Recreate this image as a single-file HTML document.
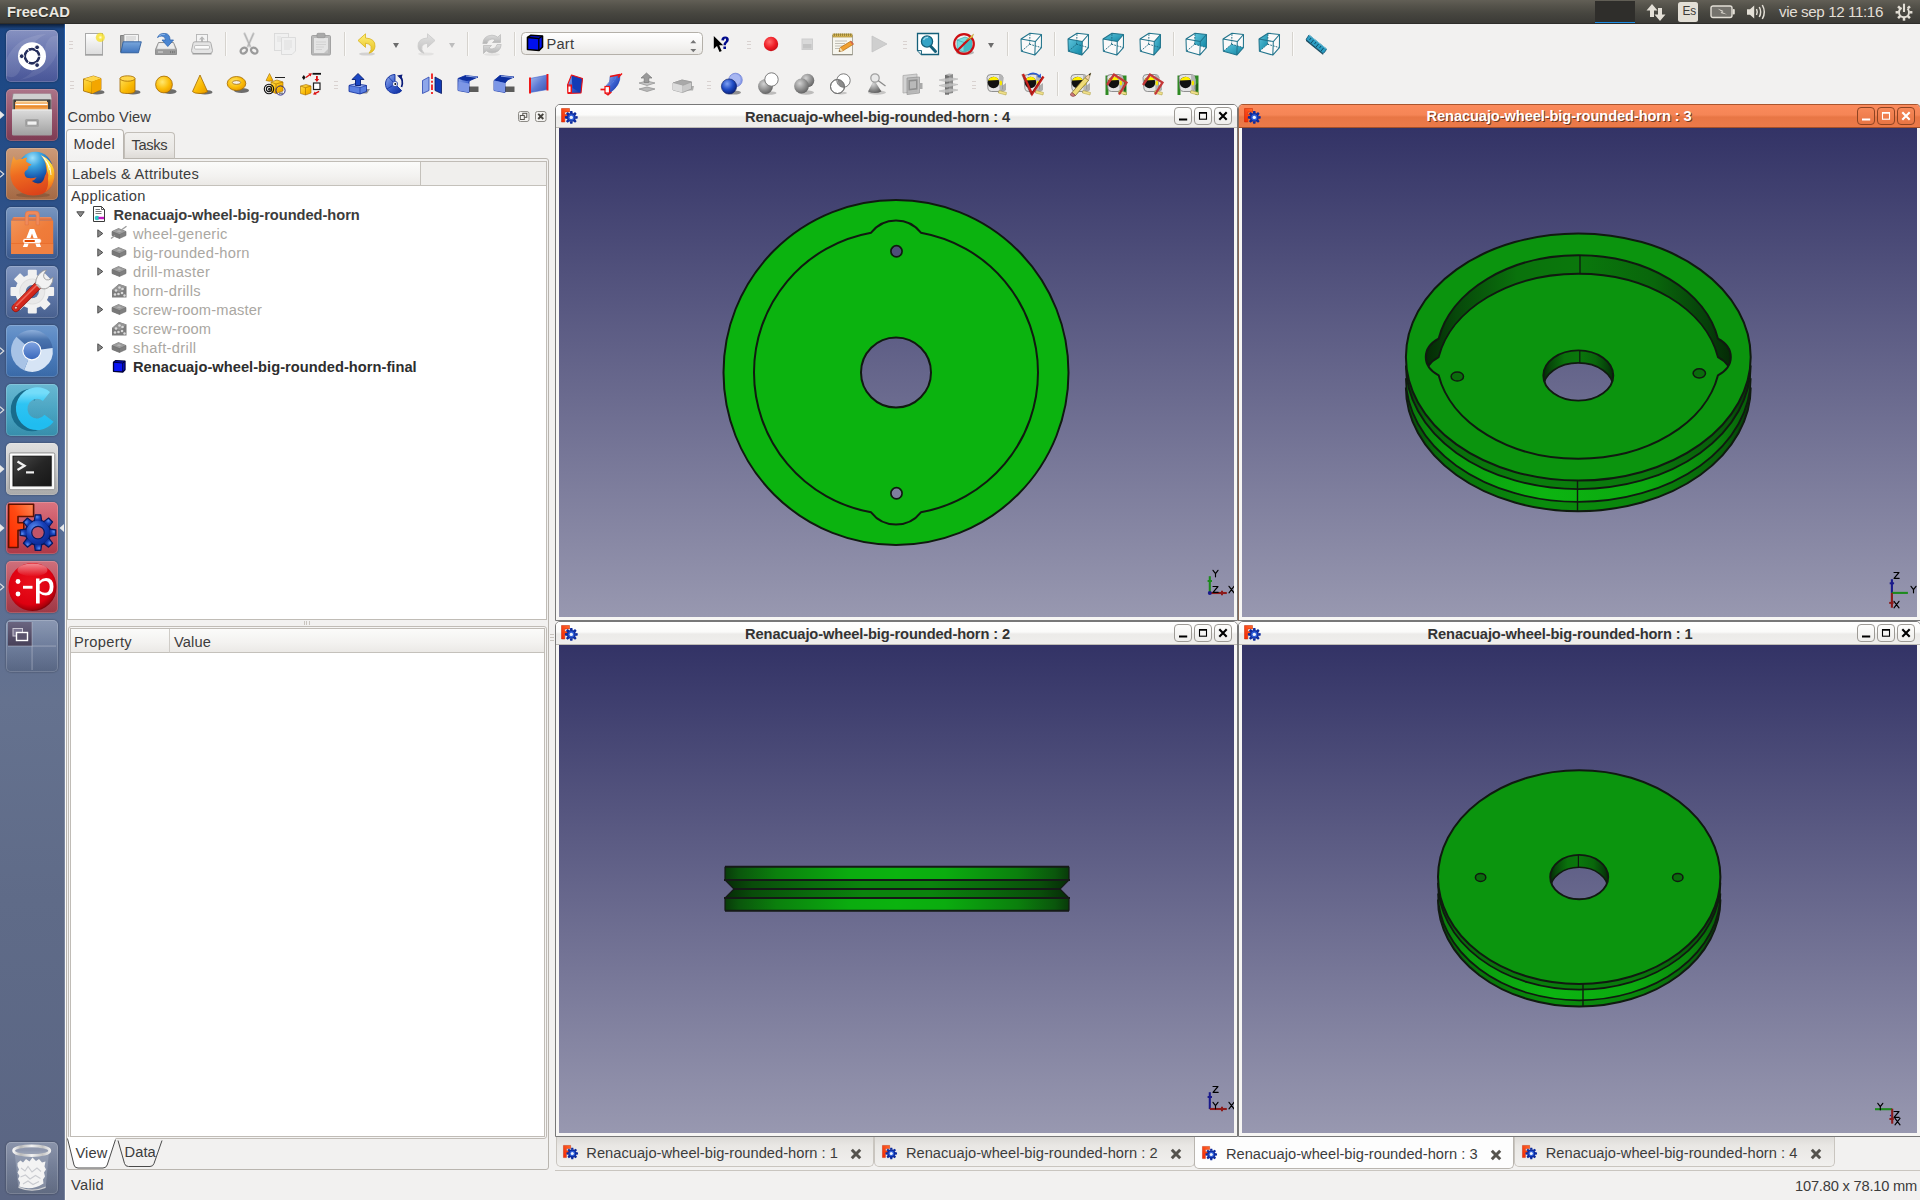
<!DOCTYPE html><html><head><meta charset="utf-8"><title>FreeCAD</title><style>
*{box-sizing:border-box;margin:0;padding:0}
html,body{width:1920px;height:1200px;overflow:hidden;background:#f2f1f0}
body{font-family:"Liberation Sans",sans-serif;font-size:14.67px;color:#3c3c3c;position:relative}
.abs{position:absolute}
.t{position:absolute;white-space:pre;line-height:1}
svg{position:absolute;overflow:visible}
#panel{position:absolute;left:0;top:0;width:1920px;height:24px;background:linear-gradient(#625f56 0,#55534b 25%,#46453f 60%,#3b3a36 100%);border-bottom:1px solid #2e2d2a}
#launcher{position:absolute;left:0;top:24px;width:65px;height:1176px;
 background:linear-gradient(#1b4582 0,#1f4a86 6.5%,#2c5088 15%,#3f5b8c 23.5%,#4a6592 32%,#566d96 40.5%,#5c6f93 49%,#65728f 57.5%,#5f6b88 74.5%,#5a6583 100%)}
#launcher:before{content:"";position:absolute;left:0;top:0;width:100%;height:5px;background:linear-gradient(rgba(0,0,0,.55),rgba(0,0,0,0))}
#launcher:after{content:"";position:absolute;right:0;top:0;width:1.500px;height:100%;background:linear-gradient(rgba(60,130,225,.42) 0,rgba(80,140,220,.35) 20%,rgba(150,170,205,.3) 40%,rgba(190,198,215,.3) 60%,rgba(190,198,215,.3) 100%)}
.tile{position:absolute;left:6px;width:52px;height:52px;border-radius:5px;overflow:hidden;box-shadow:0 0 0 1px rgba(255,255,255,.18) inset,0 0 2px rgba(0,0,0,.45)}
.tile:before{content:"";position:absolute;inset:0;border-radius:5px;background:linear-gradient(rgba(255,255,255,.16),rgba(255,255,255,.04) 50%,rgba(0,0,0,.06))}
.tile svg{left:0;top:0}

.sep{position:absolute;width:1px;background:#d6d3ce;box-shadow:1px 0 0 #fbfaf9}
.grip{position:absolute;width:4px;height:8px;background:repeating-linear-gradient(#d9d2d0 0,#d9d2d0 1px,transparent 1px,transparent 3.500px)}
.dd{position:absolute;width:0;height:0;border-left:3.800px solid transparent;border-right:3.800px solid transparent;border-top:5px solid #6c6c6c}
.hline{position:absolute;height:1px}
.vline{position:absolute;width:1px}
.frame{position:absolute;border:1px solid #b9b5af;border-radius:3px}
.hdr{position:absolute;background:linear-gradient(#fbfbfa,#f3f2f0 60%,#ebe9e6);border-bottom:1px solid #c4c1bb}
.gray{color:#aaa7a2}
.b{font-weight:700}

.win{position:absolute;background:#f7f6f4;border:1px solid #787878}
.ttl{position:absolute;left:0;right:0;top:0;height:23px;background:linear-gradient(#ffffff 0,#fbfbfa 45%,#ecebe9 55%,#efeeec 100%);border-bottom:1px solid #bdbab5}
.ttl.act{background:linear-gradient(#fb8a5c 0,#f58556 45%,#e87645 55%,#ec7a49 100%);border-bottom:1px solid #a4502a}
.ttl .tx{position:absolute;top:5px;font-weight:700;font-size:14.670px;white-space:pre;line-height:1;color:#333;letter-spacing:-.1px}
.ttl.act .tx{color:#fff;top:4px;text-shadow:1px 1px 0 rgba(90,45,25,.85)}
.win.actw{border-top-color:#a9552e;border-left-color:#8a6a5a}
.wb{position:absolute;top:2px;width:18px;height:18px;border:1px solid #9d9a95;border-radius:4px;background:linear-gradient(#fdfdfc,#efeeec)}
.act .wb{border-color:#8e4422;background:linear-gradient(#f78858,#e87544)}
.vp{position:absolute;background:linear-gradient(#333366,#9898b0);overflow:hidden}
.vp svg{left:0;top:0}
.ax{font-size:10px;fill:#111;font-family:"Liberation Sans",sans-serif}
</style></head><body><div id="panel"><div class="t" style="left:6.500px;top:5.500px;font-size:13.800px;font-weight:700;color:#ece9e2;transform:scaleX(1.065);transform-origin:0 0;text-shadow:0 1px 1px rgba(0,0,0,.55)">FreeCAD</div><div class="abs" style="left:1595px;top:1px;width:40px;height:22px;background:#2f2e2b"></div><div class="abs" style="left:1595px;top:21.6px;width:40px;height:1.4px;background:#1d8ee6"></div><svg style="left:1645px;top:2px" width="22" height="20" viewBox="0 0 22 20"><path d="M7 2 L12.5 8.5 H9 V15 H5 V8.5 H1.5 Z" fill="#e3dfd6"/><path d="M15 19 L9.5 12.5 H13 V6 H17 V12.5 H20.5 Z" fill="#e3dfd6"/></svg><div class="abs" style="left:1678px;top:2px;width:20px;height:20px;border-radius:2.5px;background:#e3dfd6"></div><div class="t" style="left:1682.6px;top:6px;font-size:11.9px;color:#3c3b37;letter-spacing:-.2px">Es</div><svg style="left:1710px;top:5px" width="26" height="14" viewBox="0 0 26 14"><rect x="1" y="1" width="21" height="11.5" rx="2" fill="#75736d" stroke="#e3dfd6" stroke-width="1.4"/><rect x="22.6" y="4" width="2.2" height="5.5" rx="1" fill="#e3dfd6"/><path d="M7.5 3.6 L13.5 6 L12 7 L17 9.6 L10.5 8 L12 6.8 Z" fill="#e3dfd6"/></svg><svg style="left:1746px;top:3px" width="22" height="18" viewBox="0 0 22 18"><path d="M1 6.3 H4 L8.2 2.4 V15.6 L4 11.7 H1 Z" fill="#e3dfd6"/><path d="M10.5 6 Q12 9 10.5 12" fill="none" stroke="#e3dfd6" stroke-width="1.5"/><path d="M13.3 4 Q16 9 13.3 14" fill="none" stroke="#e3dfd6" stroke-width="1.5"/><path d="M16.3 2 Q20.3 9 16.3 16" fill="none" stroke="#e3dfd6" stroke-width="1.5"/></svg><div class="t" style="left:1779px;top:3.5px;font-size:15.2px;color:#e3dfd6;letter-spacing:-.4px">vie sep 12 11:16</div><svg style="left:1895px;top:2.700px" width="18" height="18" viewBox="0 0 18 18"><g transform="translate(9 9.300)"><circle r="5" fill="none" stroke="#e3dfd6" stroke-width="1.900" stroke-dasharray="25.3 6.100" stroke-dashoffset="-26.600"/><g fill="#e3dfd6"><rect x="-1.250" y="-8.400" width="2.500" height="3" transform="rotate(45)"/><rect x="-1.250" y="-8.400" width="2.500" height="3" transform="rotate(90)"/><rect x="-1.250" y="-8.400" width="2.500" height="3" transform="rotate(135)"/><rect x="-1.250" y="-8.400" width="2.500" height="3" transform="rotate(180)"/><rect x="-1.250" y="-8.400" width="2.500" height="3" transform="rotate(225)"/><rect x="-1.250" y="-8.400" width="2.500" height="3" transform="rotate(270)"/><rect x="-1.250" y="-8.400" width="2.500" height="3" transform="rotate(315)"/><rect x="-1.050" y="-8.600" width="2.100" height="8.300"/></g></g></svg></div><div id="launcher"><div class="tile" style="top:6px;background:linear-gradient(#6f7cb4,#4d5ba0);"><svg width="52" height="52" viewBox="0 0 52 52"><path d="M0 30 Q10 6 40 4 Q20 14 14 40 Q10 50 0 46Z" fill="#fff" opacity=".10"/><path d="M52 20 Q46 44 14 50 Q36 40 40 14 Q44 4 52 6Z" fill="#fff" opacity=".08"/><circle cx="26" cy="26.200" r="14" fill="#fff"/><circle cx="26" cy="26.200" r="7.100" fill="none" stroke="#252e5c" stroke-width="2.700"/><g stroke="#fff" stroke-width="1"><path d="M26 26.200 L36 26.200 M26 26.200 L21 17.500 M26 26.200 L21 34.900"/></g><circle cx="26" cy="26.200" r="5.700" fill="#fff"/><g fill="#252e5c" stroke="#fff" stroke-width="1"><circle cx="15.700" cy="26.200" r="2.400"/><circle cx="31.100" cy="17.300" r="2.400"/><circle cx="31.100" cy="35.100" r="2.400"/></g></svg></div><div class="tile" style="top:65px;background:linear-gradient(#9c5a72,#853f58);"><svg width="52" height="52" viewBox="0 0 52 52"><defs><linearGradient id="lgf" x1="0" y1="0" x2="0" y2="1"><stop offset="0" stop-color="#dcdcdc"/><stop offset="1" stop-color="#a0a0a0"/></linearGradient></defs><path d="M6.500 4.800 H45.500 V46 H6.500Z" fill="#8f8f8f"/><path d="M7.500 4.800 H44.500 L45.500 10.500 H6.500Z" fill="#cfcfcf"/><rect x="7.500" y="10.500" width="37" height="11" fill="#3e3e3e"/><path d="M9 13 H42 V21 H9Z" fill="#f0a24e"/><path d="M10 11.800 H41 V13.500 H10Z" fill="#f7d9a8"/><path d="M9.500 15.300 H41.500" stroke="#fff" stroke-width="1.300"/><path d="M9.500 17.800 H41.500" stroke="#e98a30" stroke-width="1.500"/><rect x="6" y="20.500" width="40" height="26" rx="1.500" fill="url(#lgf)"/><path d="M6 21 H46" stroke="#eee" stroke-width="1"/><rect x="19" y="30" width="14" height="8" rx="1.500" fill="#a4a4a4"/><rect x="21" y="32" width="10" height="4.200" rx=".8" fill="#f1f1f1" stroke="#8a8a8a" stroke-width=".7"/></svg></div><div class="tile" style="top:124px;background:linear-gradient(#c2885f,#ad6f48);"><svg width="52" height="52" viewBox="0 0 52 52"><defs><radialGradient id="ffb" cx=".42" cy=".18" r=".85"><stop offset="0" stop-color="#9fe0fa"/><stop offset=".3" stop-color="#3aa4e0"/><stop offset=".65" stop-color="#1a5cb0"/><stop offset="1" stop-color="#12246e"/></radialGradient><linearGradient id="ffo" x1=".2" y1="0" x2=".5" y2="1"><stop offset="0" stop-color="#f7a233"/><stop offset=".45" stop-color="#ee6a20"/><stop offset="1" stop-color="#dc431a"/></linearGradient><linearGradient id="ffy" x1="0" y1="0" x2=".2" y2="1"><stop offset="0" stop-color="#fff8c8"/><stop offset=".35" stop-color="#ffe23a"/><stop offset=".75" stop-color="#fba41e"/><stop offset="1" stop-color="#ee6a20"/></linearGradient></defs><ellipse cx="27" cy="47" rx="17" ry="2.500" fill="#000" opacity=".15"/><circle cx="29.300" cy="21" r="17.300" fill="url(#ffb)"/><path d="M7.600 8.300 Q8.500 11 10.500 12.200 Q13 10.800 16.200 11 Q18.800 9.300 21.200 9.800 Q19.800 11.600 20.200 13.800 Q23 15.200 25.500 16.700 Q24 18 22.300 18.300 Q22.800 19.800 21.500 21.500 Q18.800 22.500 18.400 25 Q18.400 27.800 20.800 29.800 Q25.500 30.800 30.700 29.300 Q28.800 32.300 25.800 33 Q30 36.600 34.800 35 Q38 32.800 38.800 28 Q41.500 24 40 19.500 Q40 13 35 7.300 Q44.500 11.500 47.800 21 Q50 31 44.500 39.500 Q38 47.800 27 47.600 Q14 47 7 36.500 Q2.500 27.500 5.200 17 Q6 12.500 7.600 8.300Z" fill="url(#ffo)"/><path d="M35 7.300 Q44.500 11.500 47.800 21 Q49.800 30 45.500 38 Q43 41.800 39.500 44 Q43 37.500 42 31 Q43 26.500 41 22.500 Q41.200 14.500 35 7.300Z" fill="url(#ffy)"/><path d="M37.500 9.500 Q43 15 43.500 22 M40 13 Q45.500 19 45 27" fill="none" stroke="#fff" stroke-width="1" opacity=".85"/></svg></div><div class="tile" style="top:183px;background:linear-gradient(#5f82b4,#3f5f96);"><svg width="52" height="52" viewBox="0 0 52 52"><defs><linearGradient id="scB" x1="0" y1="0" x2="1" y2="1"><stop offset="0" stop-color="#f29458"/><stop offset=".5" stop-color="#ef7c3a"/><stop offset="1" stop-color="#ee7636"/></linearGradient></defs><path d="M7.300 10.200 H45 L47.200 13.700 H5.100Z" fill="#de7444"/><path d="M7.300 10.200 H45 V11.200 H7.300Z" fill="#f09060"/><path d="M5.100 13.700 H47.200 V47 H5.100Z" fill="url(#scB)"/><path d="M5.100 36.500 H47.200 V47 H5.100Z" fill="#f08244" opacity=".85"/><path d="M5.100 36.500 H47.200" stroke="#e86a28" stroke-width=".7"/><path d="M19.100 17.900 V8 Q19.100 4.100 22.500 4.100 H30 Q33.400 4.100 33.400 8 V17.900 H30.100 V9 Q30.100 7.500 28.800 7.500 H23.700 Q22.400 7.500 22.400 9 V17.900Z" fill="#ee8a5c" stroke="#e0703e" stroke-width=".5"/><path d="M16.900 40.100 L23.800 22 H28.200 L35.100 40.100 H30.600 L26 26.500 L21.400 40.100Z" fill="#fff"/><rect x="16.700" y="31.500" width="18.700" height="4.900" rx="2.400" fill="#fff" stroke="#ee7a38" stroke-width=".6"/><rect x="18.400" y="33.100" width="10.600" height="1.800" rx=".9" fill="#e04a00"/></svg></div><div class="tile" style="top:242px;background:linear-gradient(#6a83b4,#4c6698);"><svg width="52" height="52" viewBox="0 0 52 52"><defs><linearGradient id="wrr" x1="0" y1="0" x2="1" y2="1"><stop offset="0" stop-color="#f0584a"/><stop offset=".5" stop-color="#d8281c"/><stop offset="1" stop-color="#a81810"/></linearGradient></defs><g transform="translate(26.300 25.600)"><g fill="#f1f1f1"><circle r="17"/><rect x="-4.500" y="-21.800" width="9" height="8" rx="1" transform="rotate(0)"/><rect x="-4.500" y="-21.800" width="9" height="8" rx="1" transform="rotate(45)"/><rect x="-4.500" y="-21.800" width="9" height="8" rx="1" transform="rotate(90)"/><rect x="-4.500" y="-21.800" width="9" height="8" rx="1" transform="rotate(135)"/><rect x="-4.500" y="-21.800" width="9" height="8" rx="1" transform="rotate(180)"/><rect x="-4.500" y="-21.800" width="9" height="8" rx="1" transform="rotate(225)"/><rect x="-4.500" y="-21.800" width="9" height="8" rx="1" transform="rotate(270)"/><rect x="-4.500" y="-21.800" width="9" height="8" rx="1" transform="rotate(315)"/></g><circle r="13" fill="#dedede"/><circle r="12" fill="#e9e9e9"/><circle r="6.600" fill="#55709f"/></g><path d="M9.800 41.800 L32.500 19" stroke="#8e140c" stroke-width="8.200" stroke-linecap="round"/><path d="M9.800 41.800 L32.500 19" stroke="url(#wrr)" stroke-width="7" stroke-linecap="round"/><path d="M10.500 39.500 L31 19" stroke="#f27a6a" stroke-width="1.500" stroke-linecap="round" opacity=".8"/><circle cx="9.900" cy="41.700" r="1.500" fill="#e8c8c4" stroke="#8e140c" stroke-width=".7"/><path d="M29.500 17.500 Q30 9.500 36.500 5.200 Q38.500 4 40.500 4 Q36 9 38.500 12.500 Q42 16 47 11 Q47.500 16 44 20 Q39.500 24.500 34.500 22 Z" fill="#f2f2f2" stroke="#8f8f8f" stroke-width=".8"/><path d="M31 18.500 L34.500 22" stroke="#bdbdbd" stroke-width="2"/></svg></div><div class="tile" style="top:301px;background:linear-gradient(#4f82c2,#3d70b2);"><svg width="52" height="52" viewBox="0 0 52 52"><defs><linearGradient id="chT" x1="0" y1="0" x2="0" y2="1"><stop offset="0" stop-color="#8fb0dc"/><stop offset=".45" stop-color="#4a74ae"/><stop offset="1" stop-color="#3b62a0"/></linearGradient><linearGradient id="chI" x1="0" y1="0" x2="0" y2="1"><stop offset="0" stop-color="#7ea2e0"/><stop offset="1" stop-color="#3a68bc"/></linearGradient></defs><path d="M25.9 25.8 L10.37 11.82 A20.9 20.9 0 0 1 46.60 22.89Z" fill="url(#chT)"/><path d="M25.9 25.8 L46.60 22.89 A20.9 20.9 0 0 1 18.07 45.18Z" fill="#d6e4f5"/><path d="M25.9 25.8 L18.07 45.18 A20.9 20.9 0 0 1 10.37 11.82Z" fill="#a8c3e6"/><circle cx="25.9" cy="25.8" r="9.6" fill="#fff"/><circle cx="25.9" cy="25.8" r="8.5" fill="url(#chI)"/></svg></div><div class="tile" style="top:360px;background:linear-gradient(#4cabca,#3a97b6);"><svg width="52" height="52" viewBox="0 0 52 52"><defs><linearGradient id="cuG" x1="0" y1="0" x2="0" y2="1"><stop offset="0" stop-color="#74dcf9"/><stop offset=".35" stop-color="#2ec4f3"/><stop offset="1" stop-color="#20bdf0"/></linearGradient></defs><path d="M33.15 39.51 A15.3 15.6 0 1 1 30.73 11.34" fill="none" stroke="#196c8c" stroke-width="11"/><path d="M43.06 34.30 A15.3 15.6 0 1 1 40.42 12.41" fill="none" stroke="url(#cuG)" stroke-width="11.500"/></svg></div><div class="tile" style="top:419px;background:linear-gradient(#d9d9d9,#b4b4b4);"><svg width="52" height="52" viewBox="0 0 52 52"><defs><linearGradient id="tmS" x1="0" y1="0" x2="1" y2="1"><stop offset="0" stop-color="#4a4a4a"/><stop offset=".5" stop-color="#262626"/><stop offset="1" stop-color="#161616"/></linearGradient></defs><rect x="3.400" y="9.900" width="45.400" height="36.800" rx="1.500" fill="#ededed" stroke="#8c8c8c" stroke-width=".9"/><rect x="5" y="11.500" width="42.200" height="33.600" fill="none" stroke="#fff" stroke-width="1.200"/><rect x="7" y="13.200" width="38.200" height="29.700" fill="url(#tmS)" stroke="#0e0e0e" stroke-width=".9"/><path d="M11.500 18.500 L18.500 22.800 L11.500 27" fill="none" stroke="#f0f0f0" stroke-width="2.300"/><rect x="20" y="28.300" width="8" height="2.200" fill="#f0f0f0"/></svg></div><div class="tile" style="top:478px;background:linear-gradient(#d45a68,#b83c4c);"><svg width="52" height="52" viewBox="0 0 52 52"><defs><linearGradient id="fcra" x1="0" y1="1" x2="1" y2="0"><stop offset="0" stop-color="#ff2800"/><stop offset=".55" stop-color="#ff4a12"/><stop offset="1" stop-color="#ff8a55"/></linearGradient><radialGradient id="fcga" cx=".35" cy=".3" r=".8"><stop offset="0" stop-color="#5a8cf0"/><stop offset=".5" stop-color="#1640b8"/><stop offset="1" stop-color="#0a2690"/></radialGradient></defs><path d="M2.600 2.200 H27.600 V14.500 H12 V20.700 H17.800 V28.400 H12 V45.500 H2.600 Z" fill="url(#fcra)" stroke="#5e1200" stroke-width="1.600" stroke-linejoin="round"/><g transform="translate(32 30.600)"><g fill="url(#fcga)" stroke="#08185c" stroke-width="1.200" stroke-linejoin="round"><circle r="12.600"/><path d="M-3.800 -11 L-2.800 -17.800 H2.800 L3.800 -11Z" transform="rotate(0)"/><path d="M-3.800 -11 L-2.800 -17.800 H2.800 L3.800 -11Z" transform="rotate(45)"/><path d="M-3.800 -11 L-2.800 -17.800 H2.800 L3.800 -11Z" transform="rotate(90)"/><path d="M-3.800 -11 L-2.800 -17.800 H2.800 L3.800 -11Z" transform="rotate(135)"/><path d="M-3.800 -11 L-2.800 -17.800 H2.800 L3.800 -11Z" transform="rotate(180)"/><path d="M-3.800 -11 L-2.800 -17.800 H2.800 L3.800 -11Z" transform="rotate(225)"/><path d="M-3.800 -11 L-2.800 -17.800 H2.800 L3.800 -11Z" transform="rotate(270)"/><path d="M-3.800 -11 L-2.800 -17.800 H2.800 L3.800 -11Z" transform="rotate(315)"/></g><circle r="11.800" fill="url(#fcga)"/><circle r="6.300" fill="#c05468" stroke="#08185c" stroke-width="1.200"/></g></svg></div><div class="tile" style="top:537px;background:linear-gradient(#c65462,#a83c4a);"><svg width="52" height="52" viewBox="0 0 52 52"><defs><radialGradient id="rpg" cx=".45" cy=".4" r=".62"><stop offset="0" stop-color="#e8101c"/><stop offset=".75" stop-color="#de0010"/><stop offset=".92" stop-color="#a8000a"/><stop offset="1" stop-color="#6e0006"/></radialGradient><linearGradient id="rph" x1="0" y1="0" x2="0" y2="1"><stop offset="0" stop-color="#fff" stop-opacity=".55"/><stop offset="1" stop-color="#fff" stop-opacity="0"/></linearGradient></defs><circle cx="26.500" cy="26" r="24" fill="url(#rpg)"/><ellipse cx="26.500" cy="9" rx="15" ry="6.500" fill="url(#rph)"/><g fill="#fff"><circle cx="12" cy="20.500" r="2.400"/><circle cx="12" cy="33" r="2.400"/><rect x="17" y="24.800" width="9.500" height="2.900"/><path d="M30 17.500 h3.500 v2.400 q2.800 -2.900 6.600 -2.900 q7.400 0 7.400 8.700 q0 8.700 -7.600 8.700 q-3.500 0 -6.200 -2.200 v10.300 h-3.700 z M33.700 23.200 v6.600 q2.300 2 5.300 2 q4.700 0 4.700 -6 q0 -5.900 -4.700 -5.900 q-3 0 -5.300 3.300 z"/></g></svg></div><div class="tile" style="top:596px;background:linear-gradient(#7484a4,#5d6c8b);"><svg width="52" height="52" viewBox="0 0 52 52"><defs><linearGradient id="wsd" x1="0" y1="0" x2="0" y2="1"><stop offset="0" stop-color="#6a6480"/><stop offset="1" stop-color="#463f58"/></linearGradient></defs><rect x="2" y="2" width="24" height="24" fill="url(#wsd)"/><rect x="25.600" y="2" width=".9" height="48" fill="#c4cad8" opacity=".55"/><rect x="2" y="25.600" width="48" height=".9" fill="#c4cad8" opacity=".55"/><rect x="7" y="8.500" width="9.500" height="7.500" fill="#7a7490" stroke="#c9c6d2" stroke-width="1"/><rect x="10.500" y="12.500" width="11" height="8" fill="#5a536c" stroke="#fff" stroke-width="1.400"/></svg></div><div class="tile" style="top:1118px;background:linear-gradient(#747f9a,#667189);"><svg width="52" height="52" viewBox="0 0 52 52"><defs><linearGradient id="trR" x1="0" y1="0" x2="1" y2="0"><stop offset="0" stop-color="#f4f4f4"/><stop offset=".2" stop-color="#b9b9b9"/><stop offset=".5" stop-color="#f2f2f2"/><stop offset=".8" stop-color="#c4c4c4"/><stop offset="1" stop-color="#ededed"/></linearGradient></defs><path d="M8.500 9.500 L12.300 45 Q26 50.500 39.800 45 L43 9.500Z" fill="#a9b2c4" opacity=".45"/><path d="M12.300 44.500 Q26 50.500 39.800 44.500 L39.600 46 Q26 51.500 12.500 46Z" fill="#d9d9d9" opacity=".9"/><path d="M11.500 21 l3 -2.500 l2.500 2 l3 -3.500 l3.500 2.500 l3 -4 l3.500 3.500 l3 -2 l3 3.500 l3.500 -1 l-1 5 l1.500 3 l-2 3 l1 4 l-2 3 l.5 4 Q26 49 13.200 44.500 l.8 -4 l-2 -3.500 l1.500 -3 l-2 -3.500 l1.500 -3 l-1.500 -3.500z" fill="#f3f3f3"/><path d="M15 26 l4 3 l3 -4.500 l4 5.500 l5 -4 l4 3.500 M14.500 35 l5 -2 l4.500 4 l5.500 -3.500 l5 3 M17 42 l5 -3 l5 3.500 l6 -3" fill="none" stroke="#c9cbd0" stroke-width="1.100"/><ellipse cx="25.700" cy="8.700" rx="18" ry="4.800" fill="none" stroke="url(#trR)" stroke-width="3"/><ellipse cx="25.700" cy="8.700" rx="16.300" ry="3.400" fill="#9aa3b6" opacity=".55"/></svg></div><svg style="left:0;top:87px" width="5" height="8"><path d="M0 0 L4.500 4 L0 8Z" fill="#e8e8e8"/></svg><svg style="left:0;top:146px" width="5" height="8"><path d="M0 .7 L3.800 4 L0 7.300" fill="none" stroke="#e0e0e0" stroke-width="1.1"/></svg><svg style="left:0;top:323px" width="5" height="8"><path d="M0 .7 L3.800 4 L0 7.300" fill="none" stroke="#e0e0e0" stroke-width="1.1"/></svg><svg style="left:0;top:382px" width="5" height="8"><path d="M0 .7 L3.800 4 L0 7.300" fill="none" stroke="#e0e0e0" stroke-width="1.1"/></svg><svg style="left:0;top:441px" width="5" height="8"><path d="M0 0 L4.500 4 L0 8Z" fill="#e8e8e8"/></svg><svg style="left:0;top:500px" width="5" height="8"><path d="M0 0 L4.500 4 L0 8Z" fill="#e8e8e8"/></svg><svg style="left:0;top:559px" width="5" height="8"><path d="M0 .7 L3.800 4 L0 7.300" fill="none" stroke="#e0e0e0" stroke-width="1.1"/></svg><svg style="left:59px;top:500px" width="5" height="8"><path d="M5 0 L.5 4 L5 8Z" fill="#e8e8e8"/></svg></div><div class="vline" style="left:65px;top:24px;height:1176px;background:#fcfbf9"></div><svg width="0" height="0" style="left:0;top:0"><defs><linearGradient id="gPage" x1="0" y1="0" x2="0" y2="1"><stop offset="0" stop-color="#ffffff"/><stop offset="1" stop-color="#dcdcdc"/></linearGradient><radialGradient id="gStar"><stop offset="0" stop-color="#fffbe0"/><stop offset=".45" stop-color="#fbe84a"/><stop offset="1" stop-color="#f3d800" stop-opacity=".55"/></radialGradient><linearGradient id="gFold" x1="0" y1="0" x2="0" y2="1"><stop offset="0" stop-color="#7aa7dc"/><stop offset="1" stop-color="#3f74bd"/></linearGradient><linearGradient id="gDrive" x1="0" y1="0" x2="0" y2="1"><stop offset="0" stop-color="#e2e2e2"/><stop offset="1" stop-color="#8f8f8f"/></linearGradient><linearGradient id="gUndo" x1="0" y1="0" x2="0" y2="1"><stop offset="0" stop-color="#fff07a"/><stop offset="1" stop-color="#e6bf1c"/></linearGradient><linearGradient id="gGray" x1="0" y1="0" x2="0" y2="1"><stop offset="0" stop-color="#dedede"/><stop offset="1" stop-color="#b4b4b4"/></linearGradient><radialGradient id="gRed" cx=".4" cy=".35" r=".7"><stop offset="0" stop-color="#ff6a6a"/><stop offset=".6" stop-color="#ee1c24"/><stop offset="1" stop-color="#c00e16"/></radialGradient><linearGradient id="gTeal" x1="0" y1="0" x2="1" y2="1"><stop offset="0" stop-color="#5ec4dc"/><stop offset="1" stop-color="#0f86a4"/></linearGradient><linearGradient id="gYel" x1="0" y1="0" x2="1" y2="1"><stop offset="0" stop-color="#ffe15a"/><stop offset=".6" stop-color="#f9b800"/><stop offset="1" stop-color="#e89a00"/></linearGradient><radialGradient id="gYelR" cx=".4" cy=".35" r=".7"><stop offset="0" stop-color="#ffe870"/><stop offset=".6" stop-color="#fbbd08"/><stop offset="1" stop-color="#e89800"/></radialGradient><linearGradient id="gBlu" x1="0" y1="0" x2="1" y2="1"><stop offset="0" stop-color="#9fb4ea"/><stop offset=".5" stop-color="#3a5fcf"/><stop offset="1" stop-color="#0b2a9a"/></linearGradient><radialGradient id="gBluR" cx=".38" cy=".32" r=".7"><stop offset="0" stop-color="#7ea0f2"/><stop offset=".55" stop-color="#1f4bc4"/><stop offset="1" stop-color="#08207a"/></radialGradient><radialGradient id="gGryR" cx=".38" cy=".32" r=".75"><stop offset="0" stop-color="#d2d2d2"/><stop offset=".6" stop-color="#8a8a8a"/><stop offset="1" stop-color="#5c5c5c"/></radialGradient><radialGradient id="gWhtR" cx=".4" cy=".35" r=".75"><stop offset="0" stop-color="#ffffff"/><stop offset=".8" stop-color="#f2f2f2"/><stop offset="1" stop-color="#cfcfcf"/></radialGradient></defs></svg><div class="grip" style="left:69px;top:41px"></div><svg style="left:82px;top:32px" width="24" height="24" viewBox="0 0 24 24"><rect x="3.500" y="1.500" width="17" height="21" fill="url(#gPage)" stroke="#a9a9a9"/><path d="M3 23.200H21" stroke="#8a8a8a" stroke-width=".8"/><circle cx="18.300" cy="5.400" r="4.600" fill="url(#gStar)"/></svg><svg style="left:117.5px;top:32px" width="24" height="24" viewBox="0 0 24 24"><path d="M2.500 3.500 H9 l1.500 2 H19 V20 H2.500Z" fill="#9a9a9a" stroke="#6e6e6e" stroke-width=".8"/><path d="M6 2.500 H20.500 V14 H6Z" fill="#f4f4f4" stroke="#9c9c9c" stroke-width=".8"/><path d="M8 5h10M8 7h10M8 9h8" stroke="#c5c5c5" stroke-width=".9"/><path d="M5.200 9.800 H23.300 L20.400 20.800 H2.800 Z" fill="url(#gFold)" stroke="#2f5f9e" stroke-width=".9"/></svg><svg style="left:154px;top:32px" width="24" height="24" viewBox="0 0 24 24"><path d="M4.500 10.500 L1.500 17.500 V22.500 H22.500 V17.500 L19.500 10.500Z" fill="url(#gDrive)" stroke="#8a8a8a" stroke-width=".9"/><path d="M5 11.200 L3 16.800 H21 L19 11.200Z" fill="#ececec"/><rect x="2" y="17.500" width="20" height="4.600" fill="#9a9a9a"/><path d="M4 20h5" stroke="#d2d2d2" stroke-width="1.200"/><path d="M16.500 19v2.200M18.500 19v2.200M20.200 19v2.200" stroke="#727272" stroke-width=".8"/><path d="M3.500 5.500 Q5.500 .8 11.500 1.500 Q16 2.200 16 8 H19.500 L13.800 14.500 L8 8 H11.500 Q11.500 4.500 8 4 Q5.500 3.800 3.500 5.500Z" fill="#4a86d2" stroke="#2f65ae" stroke-width=".8"/><path d="M5 4.200 Q7 2 11 2.300" stroke="#8db8ea" stroke-width=".9" fill="none"/></svg><svg style="left:190px;top:32px" width="24" height="24" viewBox="0 0 24 24"><rect x="6.500" y="2.500" width="11" height="9" fill="#f4f4f4" stroke="#b4b4b4" stroke-width=".9"/><path d="M12 4.200 l3 3.300h-2v3h-2v-3h-2z" fill="#b8b8b8"/><path d="M3 11.500 Q3 9.800 5 9.800 H19 Q21 9.800 21 11.500 L22.500 18.500 Q22.500 21.500 20 21.500 H4 Q1.500 21.500 1.500 18.500Z" fill="#e4e4e4" stroke="#a6a6a6" stroke-width=".9"/><rect x="4.500" y="13.500" width="15" height="3.600" rx="1.200" fill="#fbfbfb" stroke="#aaaaaa" stroke-width=".7"/><path d="M2.500 21.800H21.500" stroke="#9c9c9c" stroke-width="1.400"/></svg><div class="sep" style="left:225.0px;top:32px;height:24px"></div><svg style="left:237px;top:32px" width="24" height="24" viewBox="0 0 24 24"><path d="M7.500 1.500 L13.200 14.500 M16.500 1.500 L10.800 14.500" stroke="#d0d0d0" stroke-width="2.400" stroke-linecap="round"/><path d="M7.500 1.500 L13.200 14.500 M16.500 1.500 L10.800 14.500" stroke="#a8a8a8" stroke-width=".8" fill="none"/><g fill="none" stroke="#9b9b9b" stroke-width="2.300"><ellipse cx="6.800" cy="18.600" rx="3.400" ry="2.700" transform="rotate(-35 6.800 18.600)"/><ellipse cx="17.200" cy="18.600" rx="3.400" ry="2.700" transform="rotate(35 17.200 18.600)"/></g></svg><svg style="left:272.5px;top:32px" width="24" height="24" viewBox="0 0 24 24"><g fill="#f0f0f0" stroke="#d9d9d9" stroke-width=".9"><rect x="1.500" y="1.500" width="14" height="17"/><path d="M8.500 5.500 H22.500 V19 L19 22.500 H8.500Z"/></g><path d="M11 9h8M11 11h8M11 13h8M11 15h8M11 17h6" stroke="#dedede" stroke-width="1.100"/><path d="M4 5h4M4 7h4M4 9h4" stroke="#e0e0e0" stroke-width="1"/></svg><svg style="left:309px;top:32px" width="24" height="24" viewBox="0 0 24 24"><rect x="2.500" y="3.500" width="19" height="19.500" rx="1.200" fill="#b9b9b9" stroke="#a3a3a3"/><rect x="5" y="6" width="14" height="15" fill="#e4e4e4"/><rect x="8" y="1.300" width="8" height="4.400" rx="1" fill="#a9a9a9" stroke="#989898" stroke-width=".8"/><path d="M7 10h10M7 12.500h10M7 15h8M7 17.500h6" stroke="#d2d2d2" stroke-width="1.100"/><path d="M19 17 V21 H15Z" fill="#c4c4c4"/></svg><div class="sep" style="left:344.0px;top:32px;height:24px"></div><svg style="left:356px;top:32px" width="24" height="24" viewBox="0 0 24 24"><ellipse cx="11" cy="22" rx="8" ry="1.600" fill="#000" opacity=".13"/><path d="M2 8.500 L9.500 1.800 V6 Q19.500 6.500 19 14.500 Q18.600 19.600 13 21.200 Q16.200 17.800 15 14.500 Q13.800 11.300 9.500 11.200 V15.400Z" fill="url(#gUndo)" stroke="#d9b31a" stroke-width=".8"/></svg><div class="dd" style="left:392.7px;top:42.5px"></div><svg style="left:412.5px;top:32px" width="24" height="24" viewBox="0 0 24 24"><ellipse cx="13" cy="22" rx="8" ry="1.600" fill="#000" opacity=".06"/><path d="M22 8.500 L14.500 1.800 V6 Q4.500 6.500 5 14.500 Q5.400 19.600 11 21.200 Q7.800 17.800 9 14.500 Q10.200 11.300 14.500 11.200 V15.400Z" fill="url(#gGray)" stroke="#c2c2c2" stroke-width=".8" opacity=".8"/></svg><div class="dd" style="left:448.7px;top:42.5px;border-top-color:#bdbdbd"></div><div class="sep" style="left:467.0px;top:32px;height:24px"></div><svg style="left:479.5px;top:32px" width="24" height="24" viewBox="0 0 24 24"><ellipse cx="12" cy="22.500" rx="8" ry="1.300" fill="#000" opacity=".06"/><g fill="url(#gGray)" stroke="#b9b9b9" stroke-width=".7"><path d="M2.800 11.500 Q3.500 3.500 12 3.200 Q15.500 3.300 17.800 5.200 L20.500 2.500 V10.500 H12.500 L15 8 Q13.500 7 12 7 Q7.500 7.300 7 11.500Z"/><path d="M21.200 12.500 Q20.500 20.500 12 20.800 Q8.500 20.700 6.200 18.800 L3.500 21.500 V13.500 H11.500 L9 16 Q10.500 17 12 17 Q16.500 16.700 17 12.500Z"/></g></svg><div class="sep" style="left:514.0px;top:32px;height:24px"></div><svg style="left:710px;top:32px" width="24" height="24" viewBox="0 0 24 24"><path d="M3.800 4 V17 L7 14 L9.500 20 L11.700 19 L9.200 13.300 H13.200Z" fill="#000"/><path d="M11.300 8.300 Q11.500 4.400 15.300 4.500 Q19 4.700 18.800 8 Q18.600 9.800 16.700 11.200 Q15.800 12 15.900 13.200 H13.500 Q13.300 11.200 14.700 10 Q16.200 8.800 16.100 7.900 Q16 6.600 15.200 6.600 Q14.100 6.700 14 8.500Z M13.400 14.500 h2.600 v2.500 h-2.600z" fill="#000a8c"/></svg><div class="grip" style="left:746.5px;top:41px"></div><svg style="left:759px;top:32px" width="24" height="24" viewBox="0 0 24 24"><circle cx="12" cy="12" r="7.200" fill="url(#gRed)"/></svg><svg style="left:795px;top:32px" width="24" height="24" viewBox="0 0 24 24"><rect x="7" y="7" width="10.500" height="10.500" fill="#d9d9d9" stroke="#cdcdcd"/><rect x="8" y="12" width="8.500" height="4.500" fill="#c4c4c4"/></svg><svg style="left:831px;top:32px" width="24" height="24" viewBox="0 0 24 24"><rect x="1.500" y="3.500" width="20" height="19" fill="#f7f6ee" stroke="#a5a396" stroke-width=".9"/><rect x="2" y="2" width="19" height="3" fill="#d9b85a" stroke="#a88a2e" stroke-width=".7"/><path d="M3.500 1.500v2.500M5.500 1.500v2.500M7.500 1.500v2.500M9.500 1.500v2.500M11.500 1.500v2.500M13.500 1.500v2.500M15.500 1.500v2.500M17.500 1.500v2.500M19.500 1.500v2.500" stroke="#80702e" stroke-width=".7"/><path d="M4 9h12M4 11.500h10M4 14h9M4 16.500h6" stroke="#b9b8ae" stroke-width=".9"/><path d="M1.500 22.800H21.500" stroke="#8a887c" stroke-width="1"/><path d="M8 19.500 L9.200 15.600 L20 9 L22.500 12.200 L11.800 18.800Z" fill="#f0a030" stroke="#b06a12" stroke-width=".7"/><path d="M8 19.500 L9.200 15.600 L11.800 18.800Z" fill="#f2dcae"/><path d="M8 19.500 l.5-1.500 1 1.200z" fill="#333"/><path d="M19 9.600 l2.500 3.200 1-.6-2.500-3.200z" fill="#d45a5a"/></svg><svg style="left:867px;top:32px" width="24" height="24" viewBox="0 0 24 24"><path d="M5 4 L20 12 L5 20Z" fill="#cfcfcf" stroke="#c4c4c4" stroke-width=".8"/></svg><div class="grip" style="left:903px;top:41px"></div><svg style="left:915.5px;top:32px" width="24" height="24" viewBox="0 0 24 24"><path d="M1.500 1.500 H22.500 V22.500 H5.500 L1.500 18.500Z" fill="#fff" stroke="#15607a" stroke-width="1.300"/><path d="M1.500 18.500 H5.500 V22.500" fill="#d5e6ec" stroke="#15607a" stroke-width=".9"/><path d="M14 13.500 L19.500 19.500" stroke="#15607a" stroke-width="3" stroke-linecap="round"/><circle cx="11" cy="9.500" r="5.600" fill="#35a3c6" stroke="#15607a" stroke-width="1.300"/><path d="M7.500 8 Q9 5 12 5.500" fill="none" stroke="#a5dcec" stroke-width="1.300"/></svg><svg style="left:952px;top:32px" width="24" height="24" viewBox="0 0 24 24"><ellipse cx="13" cy="20.500" rx="9" ry="2.500" fill="#000" opacity=".25"/><path d="M5 8 L13 5 L20 7.500 V17 L12 20 L5 17.500Z" fill="#7adce0" stroke="#3a9aa0" stroke-width=".6"/><path d="M5 8 L12 10.500 L20 7.500 M12 10.500 V20" stroke="#3a9aa0" stroke-width=".6" fill="none"/><path d="M12 10.500 L20 7.500 V17 L12 20Z" fill="#44b8c2"/><circle cx="12" cy="12" r="9.800" fill="none" stroke="#cc0d12" stroke-width="2.200"/><path d="M5.200 18.800 L18.800 5.200" stroke="#cc0d12" stroke-width="2.200"/><path d="M14 8.500 L21.500 2.200 L20.200 5.500Z" fill="#f6d34a" stroke="#a58a1a" stroke-width=".5"/></svg><div class="dd" style="left:988.2px;top:42.5px"></div><div class="sep" style="left:1007.0px;top:32px;height:24px"></div><svg style="left:1018.5px;top:32px" width="24" height="24" viewBox="0 0 24 24"><path d="M2 7 L16.3 9.6 L15.8 23.1 L2.4 19.3Z" fill="rgba(255,255,255,.6)"/><path d="M2 7 L11 1.2 L22.5 2.5 L16.3 9.6Z" fill="rgba(255,255,255,.6)"/><path d="M16.3 9.6 L22.5 2.5 L22.4 15.6 L15.8 23.1Z" fill="rgba(255,255,255,.6)"/><path d="M10.6 12.25 L11 1.2 M10.6 12.25 L22.4 15.6 M10.6 12.25 L2.4 19.3" stroke="#1b6880" stroke-width=".95" stroke-dasharray="1.7 1.1" fill="none"/><path d="M2 7 L16.3 9.6 L15.8 23.1 L2.4 19.3Z M2 7 L11 1.2 L22.5 2.5 L22.4 15.6 L15.8 23.1 M16.3 9.6 L22.5 2.5" stroke="#21748c" stroke-width="1.05" fill="none" stroke-linejoin="round"/></svg><div class="sep" style="left:1054.0px;top:32px;height:24px"></div><svg style="left:1065.5px;top:32px" width="24" height="24" viewBox="0 0 24 24"><path d="M2 7 L16.3 9.6 L15.8 23.1 L2.4 19.3Z" fill="rgba(255,255,255,.6)"/><path d="M2 7 L11 1.2 L22.5 2.5 L16.3 9.6Z" fill="rgba(255,255,255,.6)"/><path d="M16.3 9.6 L22.5 2.5 L22.4 15.6 L15.8 23.1Z" fill="rgba(255,255,255,.6)"/><path d="M2 7 L16.3 9.6 L15.8 23.1 L2.4 19.3Z" fill="url(#gTeal)"/><path d="M10.6 12.25 L11 1.2 M10.6 12.25 L22.4 15.6 M10.6 12.25 L2.4 19.3" stroke="#1b6880" stroke-width=".95" stroke-dasharray="1.7 1.1" fill="none"/><path d="M2 7 L16.3 9.6 L15.8 23.1 L2.4 19.3Z M2 7 L11 1.2 L22.5 2.5 L22.4 15.6 L15.8 23.1 M16.3 9.6 L22.5 2.5" stroke="#21748c" stroke-width="1.05" fill="none" stroke-linejoin="round"/></svg><svg style="left:1101px;top:32px" width="24" height="24" viewBox="0 0 24 24"><path d="M2 7 L16.3 9.6 L15.8 23.1 L2.4 19.3Z" fill="rgba(255,255,255,.6)"/><path d="M2 7 L11 1.2 L22.5 2.5 L16.3 9.6Z" fill="rgba(255,255,255,.6)"/><path d="M16.3 9.6 L22.5 2.5 L22.4 15.6 L15.8 23.1Z" fill="rgba(255,255,255,.6)"/><path d="M2 7 L11 1.2 L22.5 2.5 L16.3 9.6Z" fill="url(#gTeal)"/><path d="M10.6 12.25 L11 1.2 M10.6 12.25 L22.4 15.6 M10.6 12.25 L2.4 19.3" stroke="#1b6880" stroke-width=".95" stroke-dasharray="1.7 1.1" fill="none"/><path d="M2 7 L16.3 9.6 L15.8 23.1 L2.4 19.3Z M2 7 L11 1.2 L22.5 2.5 L22.4 15.6 L15.8 23.1 M16.3 9.6 L22.5 2.5" stroke="#21748c" stroke-width="1.05" fill="none" stroke-linejoin="round"/></svg><svg style="left:1137.5px;top:32px" width="24" height="24" viewBox="0 0 24 24"><path d="M2 7 L16.3 9.6 L15.8 23.1 L2.4 19.3Z" fill="rgba(255,255,255,.6)"/><path d="M2 7 L11 1.2 L22.5 2.5 L16.3 9.6Z" fill="rgba(255,255,255,.6)"/><path d="M16.3 9.6 L22.5 2.5 L22.4 15.6 L15.8 23.1Z" fill="rgba(255,255,255,.6)"/><path d="M16.3 9.6 L22.5 2.5 L22.4 15.6 L15.8 23.1Z" fill="url(#gTeal)"/><path d="M10.6 12.25 L11 1.2 M10.6 12.25 L22.4 15.6 M10.6 12.25 L2.4 19.3" stroke="#1b6880" stroke-width=".95" stroke-dasharray="1.7 1.1" fill="none"/><path d="M2 7 L16.3 9.6 L15.8 23.1 L2.4 19.3Z M2 7 L11 1.2 L22.5 2.5 L22.4 15.6 L15.8 23.1 M16.3 9.6 L22.5 2.5" stroke="#21748c" stroke-width="1.05" fill="none" stroke-linejoin="round"/></svg><div class="sep" style="left:1173.0px;top:32px;height:24px"></div><svg style="left:1184px;top:32px" width="24" height="24" viewBox="0 0 24 24"><path d="M2 7 L16.3 9.6 L15.8 23.1 L2.4 19.3Z" fill="rgba(255,255,255,.6)"/><path d="M2 7 L11 1.2 L22.5 2.5 L16.3 9.6Z" fill="rgba(255,255,255,.6)"/><path d="M16.3 9.6 L22.5 2.5 L22.4 15.6 L15.8 23.1Z" fill="rgba(255,255,255,.6)"/><path d="M11 1.2 L22.5 2.5 L22.4 15.6 L10.6 12.25Z" fill="url(#gTeal)"/><path d="M10.6 12.25 L11 1.2 M10.6 12.25 L22.4 15.6 M10.6 12.25 L2.4 19.3" stroke="#1b6880" stroke-width=".95" stroke-dasharray="1.7 1.1" fill="none"/><path d="M2 7 L16.3 9.6 L15.8 23.1 L2.4 19.3Z M2 7 L11 1.2 L22.5 2.5 L22.4 15.6 L15.8 23.1 M16.3 9.6 L22.5 2.5" stroke="#21748c" stroke-width="1.05" fill="none" stroke-linejoin="round"/></svg><svg style="left:1220.5px;top:32px" width="24" height="24" viewBox="0 0 24 24"><path d="M2 7 L16.3 9.6 L15.8 23.1 L2.4 19.3Z" fill="rgba(255,255,255,.6)"/><path d="M2 7 L11 1.2 L22.5 2.5 L16.3 9.6Z" fill="rgba(255,255,255,.6)"/><path d="M16.3 9.6 L22.5 2.5 L22.4 15.6 L15.8 23.1Z" fill="rgba(255,255,255,.6)"/><path d="M2.4 19.3 L15.8 23.1 L22.4 15.6 L10.6 12.25Z" fill="url(#gTeal)"/><path d="M10.6 12.25 L11 1.2 M10.6 12.25 L22.4 15.6 M10.6 12.25 L2.4 19.3" stroke="#1b6880" stroke-width=".95" stroke-dasharray="1.7 1.1" fill="none"/><path d="M2 7 L16.3 9.6 L15.8 23.1 L2.4 19.3Z M2 7 L11 1.2 L22.5 2.5 L22.4 15.6 L15.8 23.1 M16.3 9.6 L22.5 2.5" stroke="#21748c" stroke-width="1.05" fill="none" stroke-linejoin="round"/></svg><svg style="left:1256.5px;top:32px" width="24" height="24" viewBox="0 0 24 24"><path d="M2 7 L16.3 9.6 L15.8 23.1 L2.4 19.3Z" fill="rgba(255,255,255,.6)"/><path d="M2 7 L11 1.2 L22.5 2.5 L16.3 9.6Z" fill="rgba(255,255,255,.6)"/><path d="M16.3 9.6 L22.5 2.5 L22.4 15.6 L15.8 23.1Z" fill="rgba(255,255,255,.6)"/><path d="M2 7 L11 1.2 L10.6 12.25 L2.4 19.3Z" fill="url(#gTeal)"/><path d="M10.6 12.25 L11 1.2 M10.6 12.25 L22.4 15.6 M10.6 12.25 L2.4 19.3" stroke="#1b6880" stroke-width=".95" stroke-dasharray="1.7 1.1" fill="none"/><path d="M2 7 L16.3 9.6 L15.8 23.1 L2.4 19.3Z M2 7 L11 1.2 L22.5 2.5 L22.4 15.6 L15.8 23.1 M16.3 9.6 L22.5 2.5" stroke="#21748c" stroke-width="1.05" fill="none" stroke-linejoin="round"/></svg><div class="sep" style="left:1292.0px;top:32px;height:24px"></div><svg style="left:1304px;top:32px" width="24" height="24" viewBox="0 0 24 24"><path d="M5 3 L2 7.500 L19 21.500 Q21.500 20 22.500 17 Z" fill="#2a9cc2" stroke="#1a5a78" stroke-width=".9"/><path d="M2 7.500 L19 21.500 L19.200 23 L2 9Z" fill="#174a60"/><path d="M7 6 l-1.500 2M9.500 8 l-2.500 3.200M12 10 l-1.500 2M14.500 12 l-2.500 3.200M17 14 l-1.500 2M19.500 16 l-2.500 3.200" stroke="#0d3a50" stroke-width=".8"/><path d="M5 3 L22.500 17" stroke="#7ad0ea" stroke-width=".9"/></svg><div class="abs" style="left:521px;top:32px;width:182px;height:23px;border:1px solid #b4b0a9;border-radius:4.500px;background:linear-gradient(#ffffff,#f6f5f4 50%,#ebe9e6)"></div><svg style="left:526px;top:34px" width="18" height="18" viewBox="0 0 18 18"><path d="M1.500 3.500 L5 1.200 L16.500 2 V13 L13 16.500 L1.500 15.500Z" fill="#0010f0" stroke="#000" stroke-width="1.600" stroke-linejoin="round"/><path d="M1.500 3.500 L12.800 4.500 L16.500 2 M12.800 4.500 V16.200" fill="none" stroke="#000" stroke-width="1.300"/></svg><div class="t" style="left:546.500px;top:37px;font-size:14.670px;letter-spacing:.2px">Part</div><svg style="left:688px;top:36px" width="11" height="18" viewBox="0 0 11 18"><path d="M2.300 7.300 L5.300 3.900 L8.300 7.300Z M2.300 12.900 L5.300 16.300 L8.300 12.900Z" fill="#757575"/></svg><div class="grip" style="left:70px;top:81px"></div><svg style="left:81px;top:72px" width="24" height="24" viewBox="0 0 24 24"><ellipse cx="16" cy="20.200" rx="7.500" ry="2.300" fill="#000" opacity=".55"/><path d="M2.500 7 L12.500 4 L20 6.500 V17.500 L11 21.500 L2.500 19Z" fill="url(#gYel)" stroke="#a36a00" stroke-width=".8" stroke-linejoin="round"/><path d="M2.500 7 L11 9.800 L20 6.500 M11 9.800 V21.500" stroke="#a36a00" stroke-width=".8" fill="none"/><path d="M2.500 7 L12.500 4 L20 6.500 L11 9.800Z" fill="#ffd64a"/><path d="M11 9.800 L20 6.500 V17.500 L11 21.500Z" fill="#f3a600"/></svg><svg style="left:116.5px;top:72px" width="24" height="24" viewBox="0 0 24 24"><ellipse cx="16" cy="20.200" rx="7.500" ry="2.300" fill="#000" opacity=".55"/><path d="M3 6.500 V19 Q3 21.500 10.500 21.500 Q18 21.500 18 19 V6.500Z" fill="url(#gYel)" stroke="#a36a00" stroke-width=".8"/><ellipse cx="10.500" cy="6.500" rx="7.500" ry="2.700" fill="#ffd64a" stroke="#a36a00" stroke-width=".8"/></svg><svg style="left:152.5px;top:72px" width="24" height="24" viewBox="0 0 24 24"><ellipse cx="17" cy="19.500" rx="6.500" ry="2.500" fill="#000" opacity=".55"/><circle cx="11" cy="12.500" r="8.400" fill="url(#gYelR)" stroke="#a36a00" stroke-width=".8"/></svg><svg style="left:188.5px;top:72px" width="24" height="24" viewBox="0 0 24 24"><ellipse cx="16" cy="20.200" rx="7.500" ry="2.300" fill="#000" opacity=".55"/><path d="M11 3 L18.500 19.500 Q17 21.500 11 21.500 Q5 21.500 3.500 19.500Z" fill="url(#gYel)" stroke="#a36a00" stroke-width=".8" stroke-linejoin="round"/></svg><svg style="left:224.5px;top:72px" width="24" height="24" viewBox="0 0 24 24"><ellipse cx="16.500" cy="18.500" rx="7.500" ry="2.600" fill="#000" opacity=".55"/><ellipse cx="11.500" cy="11.500" rx="9.300" ry="7" fill="url(#gYelR)" stroke="#a36a00" stroke-width=".8"/><ellipse cx="11.500" cy="10.500" rx="4.200" ry="1.900" fill="#f6f1e6" stroke="#a36a00" stroke-width=".8"/></svg><svg style="left:261.5px;top:72px" width="24" height="24" viewBox="0 0 24 24"><path d="M9 10 L15 8 L21 10 V19 L14 21.500 L9 19.500Z" fill="url(#gYel)" stroke="#a36a00" stroke-width=".6"/><path d="M9 10 L14 12 L21 10 M14 12V21.500" stroke="#a36a00" stroke-width=".6" fill="none"/><path d="M7.500 1.500 L11 8.500 Q7.500 10 4 8.500Z" fill="url(#gYel)" stroke="#a36a00" stroke-width=".6"/><path d="M13 5.500H23" stroke="#222" stroke-width="1"/><g fill="none" stroke="#111" stroke-width="1.100"><circle cx="7" cy="17" r="4.700"/><circle cx="7" cy="17" r="2.600"/><circle cx="7.400" cy="17.300" r=".8"/></g><circle cx="18.500" cy="18.500" r="4.600" fill="none" stroke="#1a1a7a" stroke-width=".9"/><path d="M17 21.200 h4" stroke="#555" stroke-width="1"/></svg><svg style="left:298px;top:72px" width="24" height="24" viewBox="0 0 24 24"><path d="M2.500 14 L8 12.500 L13 14 V21 L7.500 23 L2.500 21.500Z" fill="url(#gYel)" stroke="#a36a00" stroke-width=".6"/><path d="M2.500 14 L7.500 15.700 L13 14 M7.500 15.700V23" stroke="#a36a00" stroke-width=".6" fill="none"/><rect x="15.500" y="11" width="6.500" height="6.500" fill="#fff" stroke="#222" stroke-width="1.200"/><path d="M14.500 1.800H23" stroke="#111" stroke-width="1.800"/><path d="M4 5.500 l1.800-2.500 1.800 2.500 -1.800 2.500z" fill="#111"/><g fill="#dc1010"><path d="M7.500 5 L11 2.500 L10.300 1.500 L14 1.200 L12.500 4.600 L11.800 3.600 L8.300 6Z"/><path d="M18 4 h1.800 v3 h1.400 l-2.300 3 l-2.300 -3 h1.400z"/><path d="M21.500 20 L18 21.800 L18.500 22.800 L15 22.500 L16.800 19.500 L17.300 20.500 L20.800 18.800Z"/></g></svg><div class="grip" style="left:334px;top:81px"></div><svg style="left:347px;top:72px" width="24" height="24" viewBox="0 0 24 24"><path d="M13 17 h10 l-3 4.500 h-10z" fill="#000" opacity=".4"/><path d="M2 13.500 L8 12 L19.500 13.500 V19.500 L13 22 L2 19.500Z" fill="#5a7fe0" stroke="#0b2a9a" stroke-width=".8"/><path d="M2 13.500 L13 15.500 L19.500 13.500 L8 12Z" fill="#a9bdf2" stroke="#0b2a9a" stroke-width=".6"/><path d="M13 15.500V22" stroke="#0b2a9a" stroke-width=".6"/><path d="M11 1.500 L17 7.500 H13.500 V13.500 H8.500 V7.500 H5Z" fill="#1c47c4" stroke="#061c70" stroke-width=".9"/></svg><svg style="left:383px;top:72px" width="24" height="24" viewBox="0 0 24 24"><path d="M12 12 L12 2.500 A9.500 9.500 0 1 0 18.700 18.700Z" fill="url(#gBlu)" stroke="#0b2a9a" stroke-width=".9"/><path d="M12 12 L4 17 M12 12 L5.500 5" stroke="#0b2a9a" stroke-width=".7"/><circle cx="12" cy="12" r="2.700" fill="#e8edfa" stroke="#0b2a9a" stroke-width=".7"/><path d="M16.500 4 Q21 8 18.500 15" fill="none" stroke="#0b1c7a" stroke-width="1.700"/><path d="M14 3.500 L19.500 2.500 L18.200 7.200Z" fill="#0b1c7a"/><circle cx="12.300" cy="12" r="1" fill="#111"/></svg><svg style="left:419.5px;top:72px" width="24" height="24" viewBox="0 0 24 24"><path d="M2.500 8.500 L9 5 V18.500 L2.500 21.500Z" fill="#8ea6ea" stroke="#2a44b0" stroke-width=".8"/><path d="M21.500 8.500 L15 5 V18.500 L21.500 21.500Z" fill="#123bb5" stroke="#06175e" stroke-width=".8"/><path d="M12 1.500 V23" stroke="#f01010" stroke-width="1.700" stroke-dasharray="5.500 1.800 2 1.800"/></svg><svg style="left:455.5px;top:72px" width="24" height="24" viewBox="0 0 24 24"><path d="M13 14.500 h9.500 v5.500 h-9.500z" fill="#000" opacity=".62"/><path d="M2 6.500 L9.500 3.500 L22 5 L14 8.500 Q13 8.700 13 10 V20.500 L2 18.500Z" fill="url(#gBlu)" stroke="#0b2a9a" stroke-width=".8" stroke-linejoin="round"/><path d="M2 6.500 L9.500 3.500 L22 5 L14 8.500 Q9 10 2 6.500Z" fill="#0d2f9e"/><path d="M2.500 9.500 L13 11.500 V20.500 L2 18.500Z" fill="#7d97e6"/><path d="M10 4 L21 5.300" stroke="#9fb4ea" stroke-width=".9"/></svg><svg style="left:491.5px;top:72px" width="24" height="24" viewBox="0 0 24 24"><path d="M13 14.500 h9.500 v5.500 h-9.500z" fill="#000" opacity=".62"/><path d="M2 8.500 L8 3.500 L22 5 L15.500 8 L13 11 V20.500 L2 18.500Z" fill="url(#gBlu)" stroke="#0b2a9a" stroke-width=".8" stroke-linejoin="round"/><path d="M2 8.500 L8 3.500 L22 5 L15.500 8 L13 11Z" fill="#0d2f9e"/><path d="M2 8.500 L13 11 V20.500 L2 18.500Z" fill="#7d97e6"/><path d="M9 4.200 L21 5.400" stroke="#9fb4ea" stroke-width=".9"/></svg><svg style="left:527px;top:72px" width="24" height="24" viewBox="0 0 24 24"><path d="M3 6.500 L20.500 3 V17.500 L3 20.500Z" fill="url(#gBlu)" opacity=".8"/><path d="M3 6.500 L20.500 3 M3 20.500 L20.500 17.500" stroke="#3a5fcf" stroke-width=".6"/><path d="M3 5.500 V21.500 M20.500 2 V18.500" stroke="#f01010" stroke-width="1.900"/></svg><svg style="left:563px;top:72px" width="24" height="24" viewBox="0 0 24 24"><path d="M8.500 3 L19.500 6.500 L18 21 L5 21.500 L4.500 13Z" fill="url(#gBlu)"/><path d="M8.500 3 L19.500 6.500 L18 21 L9.500 16Z" fill="#123bb5"/><path d="M8.500 3 L19.500 6.500 L18 21 L5 21.500 L4.500 13Z M4.500 13 L8.500 13 L8.500 21.400" fill="none" stroke="#f01010" stroke-width="1.100" stroke-linejoin="round"/><rect x="5" y="14" width="3" height="6.500" fill="#fff" stroke="#f01010" stroke-width=".9"/></svg><svg style="left:599px;top:72px" width="24" height="24" viewBox="0 0 24 24"><path d="M11 4.500 L21 2.500 Q22 14 9 22 L7 14 Q12 10 11 4.500Z" fill="url(#gBlu)" stroke="#123bb5" stroke-width=".5"/><path d="M11 4.500 L21 2.500 M19 5.500 L23 1.500" stroke="#f01010" stroke-width="1.500"/><path d="M10 13 Q16 10 17 4" stroke="#5a7fe0" stroke-width="1" fill="none" stroke-dasharray="2.500 1.500"/><path d="M1.500 17.500H6" stroke="#f01010" stroke-width="1.700"/><rect x="6" y="14.500" width="4.500" height="6.500" fill="#fff" stroke="#f01010" stroke-width="1.200"/><path d="M6 21 L9 23 L12.500 20" stroke="#f01010" stroke-width="1.100" fill="none"/></svg><svg style="left:634px;top:72px" width="24" height="24" viewBox="0 0 24 24"><path d="M5 17 L13 15 L21 17 L13 19.500Z" fill="#b9b9b9" stroke="#8d8d8d" stroke-width=".7"/><path d="M5 11 L13 9 L21 11 L13 13.500Z" fill="#c4c4c4" stroke="#8d8d8d" stroke-width=".7"/><path d="M12.500 1 L18 6 H14.800 V10.500 H10.200 V6 H7Z" fill="#9a9a9a" stroke="#7a7a7a" stroke-width=".7"/></svg><svg style="left:670.5px;top:72px" width="24" height="24" viewBox="0 0 24 24"><path d="M14 14 h9 l-1 4.500 h-9z" fill="#000" opacity=".28"/><path d="M2 11 L11 8 L20.500 10 V17 L11.500 20.500 L2 18Z" fill="#c9c9c9" stroke="#9a9a9a" stroke-width=".8"/><path d="M2 11 L11.500 13.500 L20.500 10 L11 8Z" fill="#a9a9a9" stroke="#9a9a9a" stroke-width=".6"/><path d="M11.500 13.500V20.500" stroke="#9a9a9a" stroke-width=".6"/><path d="M2 11 L11.500 13.500 V20.500 L2 18Z" fill="#dcdcdc"/></svg><div class="grip" style="left:707px;top:81px"></div><svg style="left:720px;top:72px" width="24" height="24" viewBox="0 0 24 24"><ellipse cx="14" cy="20.500" rx="7" ry="2" fill="#000" opacity=".4"/><circle cx="15.500" cy="8" r="6.800" fill="#8ea0ea" stroke="#5a6fd0" stroke-width=".6"/><circle cx="15" cy="7.500" r="5.500" fill="#b9c6f6" opacity=".6"/><circle cx="9" cy="14.500" r="7.600" fill="url(#gBluR)" stroke="#06175e" stroke-width=".6"/></svg><svg style="left:755.5px;top:72px" width="24" height="24" viewBox="0 0 24 24"><ellipse cx="13" cy="21" rx="7.500" ry="1.800" fill="#000" opacity=".22"/><circle cx="9.500" cy="14.500" r="7.400" fill="url(#gGryR)"/><circle cx="15.500" cy="7.500" r="6.700" fill="#fff" stroke="#6e6e6e" stroke-width=".9"/></svg><svg style="left:792px;top:72px" width="24" height="24" viewBox="0 0 24 24"><ellipse cx="14" cy="20.500" rx="8" ry="2.200" fill="#000" opacity=".22"/><circle cx="15.500" cy="8.500" r="6.800" fill="url(#gGryR)"/><circle cx="9.500" cy="14" r="7.400" fill="url(#gGryR)"/></svg><svg style="left:828px;top:72px" width="24" height="24" viewBox="0 0 24 24"><ellipse cx="13" cy="21" rx="6" ry="1.500" fill="#000" opacity=".18"/><circle cx="9.500" cy="14.500" r="7" fill="#fff" stroke="#6e6e6e" stroke-width=".9"/><circle cx="15.500" cy="8.500" r="6.700" fill="#fff" stroke="#6e6e6e" stroke-width=".9"/><path d="M9.800 7.600 A7 7 0 0 1 16.400 15.200 A6.700 6.700 0 0 1 9.800 7.600Z" fill="#8c8c8c" stroke="#6e6e6e" stroke-width=".6"/><circle cx="9.500" cy="14.500" r="7" fill="none" stroke="#6e6e6e" stroke-width=".9"/></svg><svg style="left:864px;top:72px" width="24" height="24" viewBox="0 0 24 24"><ellipse cx="13" cy="20.500" rx="9" ry="2.200" fill="#000" opacity=".18"/><path d="M10 8 L17.500 19.500 Q11 22.500 4 19.500Z" fill="url(#gGryR)"/><circle cx="11" cy="6" r="4.200" fill="#e9e9e9" stroke="#a0a0a0" stroke-width="1.300"/><path d="M14 8.500 L21.500 14" stroke="#8a8a8a" stroke-width="1.300"/></svg><svg style="left:900px;top:72px" width="24" height="24" viewBox="0 0 24 24"><path d="M3 3.500 L17 2 V19.500 L3 21Z" fill="#cfcfcf" stroke="#a5a5a5" stroke-width=".8" opacity=".9"/><path d="M7 6 L19.500 5 V21 L7 22.500Z" fill="#b5b5b5" stroke="#8d8d8d" stroke-width=".8" opacity=".85"/><path d="M8.500 8 L17.500 7.300 V17.500 L8.500 18.500Z" fill="#8e8e8e"/><path d="M10 9.500 L16 9 V16 L10 16.700Z" fill="#b9b9b9"/><path d="M19.500 11 h3 v6 h-3z" fill="#a9a9a9"/></svg><svg style="left:936px;top:72px" width="24" height="24" viewBox="0 0 24 24"><path d="M9 3 L17 2 V21 L9 22.500Z" fill="#8a8a8a"/><path d="M9 3 L13 1.500 L17 2 L13 4Z" fill="#b5b5b5"/><path d="M9 3 L13 4 V22.800 L9 22.500Z" fill="#6e6e6e"/><g fill="#c4c4c4" stroke="#a0a0a0" stroke-width=".5" opacity=".8"><path d="M3 8 L14 5.500 L22 7 L11 10Z"/><path d="M3 13.500 L14 11 L22 12.500 L11 15.500Z"/><path d="M3 19 L14 16.500 L22 18 L11 21Z"/></g></svg><div class="grip" style="left:972px;top:81px"></div><svg style="left:984px;top:72px" width="24" height="24" viewBox="0 0 24 24"><path d="M14 15 q5 -1 8 -4 v7 q-3 3 -8 3z" fill="#000" opacity=".28"/><path d="M3 5.500 Q3 2.500 7 2.500 H15 Q18.500 2.500 19 5.500 L18 17 Q17.500 19.500 14 19.500 H7.500 Q4.500 19.500 4 17Z" fill="#e3e3e3" stroke="#7a7a7a" stroke-width=".8"/><path d="M15 2.500 Q18.500 2.500 19 5.500 L18 17 Q17.500 19.500 15.500 19.500Z" fill="#b5b5b5"/><circle cx="9.500" cy="10.500" r="5.700" fill="#111"/><path d="M4.200 8.500 A5.700 5.700 0 0 1 14.600 8 Z" fill="#ffee00"/><ellipse cx="16.800" cy="11" rx="1.300" ry="2.600" fill="#f6e600"/><path d="M15 18.500 L22.500 20.500 L22 23 L14.500 21Z" fill="#f1e08a" stroke="#a89a3a" stroke-width=".5"/></svg><svg style="left:1020.5px;top:72px" width="24" height="24" viewBox="0 0 24 24"><path d="M14 15 q5 -1 8 -4 v7 q-3 3 -8 3z" fill="#000" opacity=".28"/><path d="M3 5.500 Q3 2.500 7 2.500 H15 Q18.500 2.500 19 5.500 L18 17 Q17.500 19.500 14 19.500 H7.500 Q4.500 19.500 4 17Z" fill="#e3e3e3" stroke="#7a7a7a" stroke-width=".8"/><path d="M15 2.500 Q18.500 2.500 19 5.500 L18 17 Q17.500 19.500 15.500 19.500Z" fill="#b5b5b5"/><circle cx="9.500" cy="10.500" r="5.700" fill="#111"/><path d="M4.200 8.500 A5.700 5.700 0 0 1 14.600 8 Z" fill="#ffee00"/><ellipse cx="16.800" cy="11" rx="1.300" ry="2.600" fill="#f6e600"/><path d="M15 18.500 L22.500 20.500 L22 23 L14.500 21Z" fill="#f1e08a" stroke="#a89a3a" stroke-width=".5"/><path d="M2 2 L11 22 L22.500 4.500" fill="none" stroke="#c8201c" stroke-width="2.300" stroke-linejoin="miter"/><path d="M2 2 L11 22 L22.500 4.500" fill="none" stroke="#5a0d0a" stroke-width=".5" transform="translate(-1.200 .5)"/><path d="M7 3 Q13 -1 19 4.500" fill="none" stroke="#2a5ad0" stroke-width="1.500"/><path d="M19.800 1.500 L20 6 L16 5Z" fill="#2a5ad0"/></svg><div class="sep" style="left:1057.0px;top:72px;height:24px"></div><svg style="left:1068px;top:72px" width="24" height="24" viewBox="0 0 24 24"><path d="M14 15 q5 -1 8 -4 v7 q-3 3 -8 3z" fill="#000" opacity=".28"/><path d="M3 5.500 Q3 2.500 7 2.500 H15 Q18.500 2.500 19 5.500 L18 17 Q17.500 19.500 14 19.500 H7.500 Q4.500 19.500 4 17Z" fill="#e3e3e3" stroke="#7a7a7a" stroke-width=".8"/><path d="M15 2.500 Q18.500 2.500 19 5.500 L18 17 Q17.500 19.500 15.500 19.500Z" fill="#b5b5b5"/><circle cx="9.500" cy="10.500" r="5.700" fill="#111"/><path d="M4.200 8.500 A5.700 5.700 0 0 1 14.600 8 Z" fill="#ffee00"/><ellipse cx="16.800" cy="11" rx="1.300" ry="2.600" fill="#f6e600"/><path d="M15 18.500 L22.500 20.500 L22 23 L14.500 21Z" fill="#f1e08a" stroke="#a89a3a" stroke-width=".5"/><path d="M4 20.500 L17 5.500 L20.500 8.500 L7.500 23.500Z" fill="#efdb78" stroke="#7a6a1a" stroke-width=".7"/><path d="M17 5.500 L22.800 1 L20.500 8.500Z" fill="#f0cfae" stroke="#7a6a1a" stroke-width=".5"/><path d="M20.800 2.600 L22.800 1 L22 3.700Z" fill="#111"/><path d="M4 20.500 L7.500 23.500 Q5 25.500 2.800 23.500 Q1.500 21.800 4 20.500Z" fill="#cf7a7a" stroke="#7a3a3a" stroke-width=".6"/></svg><svg style="left:1104px;top:72px" width="24" height="24" viewBox="0 0 24 24"><path d="M1.500 23 V3.500 H22.500 V23 H19.500 V6.500 H4.500 V23Z" fill="#2f8a23"/><path d="M14 15 q5 -1 8 -4 v7 q-3 3 -8 3z" fill="#000" opacity=".28"/><path d="M3 5.500 Q3 2.500 7 2.500 H15 Q18.500 2.500 19 5.500 L18 17 Q17.500 19.500 14 19.500 H7.500 Q4.500 19.500 4 17Z" fill="#e3e3e3" stroke="#7a7a7a" stroke-width=".8"/><path d="M15 2.500 Q18.500 2.500 19 5.500 L18 17 Q17.500 19.500 15.500 19.500Z" fill="#b5b5b5"/><circle cx="9.500" cy="10.500" r="5.700" fill="#111"/><path d="M4.200 8.500 A5.700 5.700 0 0 1 14.600 8 Z" fill="#ffee00"/><ellipse cx="16.800" cy="11" rx="1.300" ry="2.600" fill="#f6e600"/><path d="M15 18.500 L22.500 20.500 L22 23 L14.500 21Z" fill="#f1e08a" stroke="#a89a3a" stroke-width=".5"/><path d="M3 13 L10 2.500 L22.500 10.500 L15 22.500" fill="none" stroke="#c43838" stroke-width="2.300"/></svg><svg style="left:1140px;top:72px" width="24" height="24" viewBox="0 0 24 24"><path d="M14 15 q5 -1 8 -4 v7 q-3 3 -8 3z" fill="#000" opacity=".28"/><path d="M3 5.500 Q3 2.500 7 2.500 H15 Q18.500 2.500 19 5.500 L18 17 Q17.500 19.500 14 19.500 H7.500 Q4.500 19.500 4 17Z" fill="#e3e3e3" stroke="#7a7a7a" stroke-width=".8"/><path d="M15 2.500 Q18.500 2.500 19 5.500 L18 17 Q17.500 19.500 15.500 19.500Z" fill="#b5b5b5"/><circle cx="9.500" cy="10.500" r="5.700" fill="#111"/><path d="M4.200 8.500 A5.700 5.700 0 0 1 14.600 8 Z" fill="#ffee00"/><ellipse cx="16.800" cy="11" rx="1.300" ry="2.600" fill="#f6e600"/><path d="M15 18.500 L22.500 20.500 L22 23 L14.500 21Z" fill="#f1e08a" stroke="#a89a3a" stroke-width=".5"/><path d="M3 13 L10 2.500 L22.500 10.500 L15 22.500" fill="none" stroke="#c43838" stroke-width="2.300"/></svg><svg style="left:1175.5px;top:72px" width="24" height="24" viewBox="0 0 24 24"><path d="M1.500 23 V3.500 H22.500 V23 H19.500 V6.500 H4.500 V23Z" fill="#2f8a23"/><path d="M14 15 q5 -1 8 -4 v7 q-3 3 -8 3z" fill="#000" opacity=".28"/><path d="M3 5.500 Q3 2.500 7 2.500 H15 Q18.500 2.500 19 5.500 L18 17 Q17.500 19.500 14 19.500 H7.500 Q4.500 19.500 4 17Z" fill="#e3e3e3" stroke="#7a7a7a" stroke-width=".8"/><path d="M15 2.500 Q18.500 2.500 19 5.500 L18 17 Q17.500 19.500 15.500 19.500Z" fill="#b5b5b5"/><circle cx="9.500" cy="10.500" r="5.700" fill="#111"/><path d="M4.200 8.500 A5.700 5.700 0 0 1 14.600 8 Z" fill="#ffee00"/><ellipse cx="16.800" cy="11" rx="1.300" ry="2.600" fill="#f6e600"/><path d="M15 18.500 L22.500 20.500 L22 23 L14.500 21Z" fill="#f1e08a" stroke="#a89a3a" stroke-width=".5"/></svg><div class="t" style="left:67.500px;top:110px;letter-spacing:.05px">Combo View</div><svg style="left:517.500px;top:111px" width="12" height="11" viewBox="0 0 12 11"><rect x=".5" y=".5" width="10.500" height="10" rx="2" fill="#f4f3f1" stroke="#8e8c87"/><rect x="4.800" y="2.300" width="4" height="4" fill="none" stroke="#55534e" stroke-width="1"/><rect x="2.300" y="4.500" width="4" height="4" fill="#f4f3f1" stroke="#55534e" stroke-width="1"/></svg><svg style="left:535px;top:111px" width="12" height="11" viewBox="0 0 12 11"><rect x=".5" y=".5" width="10.500" height="10" rx="2" fill="#f4f3f1" stroke="#8e8c87"/><path d="M3.200 2.800 L8.300 8 M8.300 2.800 L3.200 8" stroke="#45433e" stroke-width="1.900"/></svg><div class="abs" style="left:66px;top:158px;width:483px;height:1012px;border:1px solid #b9b5af;border-radius:0 3px 3px 3px;background:#f2f1f0"></div><div class="abs" style="left:124px;top:132px;width:51px;height:27px;border:1px solid #c2beb8;border-bottom-color:#b9b5af;border-radius:4px 4px 0 0;background:linear-gradient(#f1f0ee,#e9e7e4 70%,#dedbd7)"></div><div class="abs" style="left:66px;top:129px;width:58px;height:30px;border:1px solid #b9b5af;border-bottom:none;border-radius:4px 4px 0 0;background:linear-gradient(#fafaf9,#f2f1f0)"></div><div class="t" style="left:73.500px;top:137px;letter-spacing:.35px">Model</div><div class="t" style="left:131.500px;top:137.500px;letter-spacing:-.35px">Tasks</div><div class="abs" style="left:67px;top:160.500px;width:480px;height:459px;border:1px solid #c0bcb6;background:#fff"></div><div class="hdr" style="left:68px;top:161.500px;width:352.500px;height:24px;border-right:1px solid #c4c1bb"></div><div class="hdr" style="left:420.500px;top:161.500px;width:125.500px;height:24px;background:#f0efed"></div><div class="t" style="left:72px;top:166.500px;letter-spacing:.25px">Labels &amp; Attributes</div><div class="t" style="left:71px;top:188.500px;letter-spacing:.27px">Application</div><svg style="left:75.8px;top:211px" width="9" height="7" viewBox="0 0 9 7"><path d="M.8 .8 L8.200 .8 L4.500 5.800Z" fill="#8a8a8a" stroke="#4e4e4e" stroke-width="1" stroke-linejoin="round"/></svg><svg style="left:91.700px;top:206px" width="14" height="16" viewBox="0 0 14 16"><path d="M1.500 .5 H9.500 L12.500 3.500 V15.500 H1.500Z" fill="#fff" stroke="#3a3a3a" stroke-width="1"/><path d="M9.500 .5 V3.500 H12.500" fill="none" stroke="#3a3a3a" stroke-width=".8"/><path d="M3.500 3.500h4.500M3.500 5.500h6M3.500 7.500h6" stroke="#555" stroke-width=".8"/><circle cx="5" cy="12" r="2.300" fill="#2ec4c4"/><rect x="6.500" y="10.800" width="5.500" height="2.400" fill="#c218c2"/></svg><div class="t b" style="left:113.500px;top:207.500px;letter-spacing:-.04px">Renacuajo-wheel-big-rounded-horn</div><svg style="left:97px;top:228.5px" width="7" height="9" viewBox="0 0 7 9"><path d="M.8 .8 L5.800 4.500 L.8 8.200Z" fill="#8a8a8a" stroke="#4e4e4e" stroke-width="1" stroke-linejoin="round"/></svg><svg style="left:111px;top:225px" width="16" height="16" viewBox="0 0 16 16"><path d="M1 6.500 L7.500 3.500 L15 6.500 V10.500 L8.500 13.500 L1 10.500Z" fill="#808080" stroke="#6c6c6c" stroke-width=".6" stroke-linejoin="round"/><path d="M1 6.500 L7.500 3.500 L15 6.500 L8.500 9.500Z" fill="#9c9c9c"/><path d="M1 6.500 L8.500 9.500 V13.500 L1 10.500Z" fill="#787878"/><path d="M1 6.500 L8.500 9.500 L15 6.500 M8.500 9.500 V13.500" fill="none" stroke="#6c6c6c" stroke-width=".5"/><path d="M5.500 6.200 L8 5.200 L10.800 6.200 L8.300 7.300Z" fill="#b4b4b4"/><path d="M0 13.500 L4 10.500 M11 4.500 L15.500 1.200" stroke="#9c9c9c" stroke-width="1.400"/></svg><div class="t gray" style="left:133px;top:226.5px;letter-spacing:0.25px">wheel-generic</div><svg style="left:97px;top:247.5px" width="7" height="9" viewBox="0 0 7 9"><path d="M.8 .8 L5.800 4.500 L.8 8.200Z" fill="#8a8a8a" stroke="#4e4e4e" stroke-width="1" stroke-linejoin="round"/></svg><svg style="left:111px;top:244px" width="16" height="16" viewBox="0 0 16 16"><path d="M1 6.500 L7.500 3.500 L15 6.500 V10.500 L8.500 13.500 L1 10.500Z" fill="#808080" stroke="#6c6c6c" stroke-width=".6" stroke-linejoin="round"/><path d="M1 6.500 L7.500 3.500 L15 6.500 L8.500 9.500Z" fill="#9c9c9c"/><path d="M1 6.500 L8.500 9.500 V13.500 L1 10.500Z" fill="#787878"/><path d="M1 6.500 L8.500 9.500 L15 6.500 M8.500 9.500 V13.500" fill="none" stroke="#6c6c6c" stroke-width=".5"/><path d="M5.500 6.200 L8 5.200 L10.800 6.200 L8.300 7.300Z" fill="#b4b4b4"/></svg><div class="t gray" style="left:133px;top:245.5px;letter-spacing:0.27px">big-rounded-horn</div><svg style="left:97px;top:266.5px" width="7" height="9" viewBox="0 0 7 9"><path d="M.8 .8 L5.800 4.500 L.8 8.200Z" fill="#8a8a8a" stroke="#4e4e4e" stroke-width="1" stroke-linejoin="round"/></svg><svg style="left:111px;top:263px" width="16" height="16" viewBox="0 0 16 16"><path d="M1 6.500 L7.500 3.500 L15 6.500 V10.500 L8.500 13.500 L1 10.500Z" fill="#808080" stroke="#6c6c6c" stroke-width=".6" stroke-linejoin="round"/><path d="M1 6.500 L7.500 3.500 L15 6.500 L8.500 9.500Z" fill="#9c9c9c"/><path d="M1 6.500 L8.500 9.500 V13.500 L1 10.500Z" fill="#787878"/><path d="M1 6.500 L8.500 9.500 L15 6.500 M8.500 9.500 V13.500" fill="none" stroke="#6c6c6c" stroke-width=".5"/><path d="M5.500 6.200 L8 5.200 L10.800 6.200 L8.300 7.300Z" fill="#b4b4b4"/></svg><div class="t gray" style="left:133px;top:264.5px;letter-spacing:0.4px">drill-master</div><svg style="left:111px;top:282px" width="16" height="16" viewBox="0 0 16 16"><path d="M1 15.500 V8 L8 2 L15.500 4.500 V15.500Z" fill="#7c7c7c"/><path d="M1 8 L8 2 L15.500 4.500 L9 10Z" fill="#949494"/><g fill="#d9d9d9"><circle cx="5" cy="8.500" r="1.300"/><circle cx="8.500" cy="5.500" r="1.300"/><circle cx="11.500" cy="7" r="1.300"/><circle cx="4" cy="12.500" r="1.300"/><circle cx="7.500" cy="12" r="1.300"/><circle cx="11" cy="11" r="1.300"/><circle cx="13.500" cy="13.500" r="1.200"/></g></svg><div class="t gray" style="left:133px;top:283.5px;letter-spacing:0.32px">horn-drills</div><svg style="left:97px;top:304.5px" width="7" height="9" viewBox="0 0 7 9"><path d="M.8 .8 L5.800 4.500 L.8 8.200Z" fill="#8a8a8a" stroke="#4e4e4e" stroke-width="1" stroke-linejoin="round"/></svg><svg style="left:111px;top:301px" width="16" height="16" viewBox="0 0 16 16"><path d="M1 6.500 L7.500 3.500 L15 6.500 V10.500 L8.500 13.500 L1 10.500Z" fill="#808080" stroke="#6c6c6c" stroke-width=".6" stroke-linejoin="round"/><path d="M1 6.500 L7.500 3.500 L15 6.500 L8.500 9.500Z" fill="#9c9c9c"/><path d="M1 6.500 L8.500 9.500 V13.500 L1 10.500Z" fill="#787878"/><path d="M1 6.500 L8.500 9.500 L15 6.500 M8.500 9.500 V13.500" fill="none" stroke="#6c6c6c" stroke-width=".5"/><path d="M5.500 6.200 L8 5.200 L10.800 6.200 L8.300 7.300Z" fill="#b4b4b4"/></svg><div class="t gray" style="left:133px;top:302.5px;letter-spacing:0.17px">screw-room-master</div><svg style="left:111px;top:320px" width="16" height="16" viewBox="0 0 16 16"><path d="M1 15.500 V8 L8 2 L15.500 4.500 V15.500Z" fill="#7c7c7c"/><path d="M1 8 L8 2 L15.500 4.500 L9 10Z" fill="#949494"/><g fill="#d9d9d9"><circle cx="5" cy="8.500" r="1.300"/><circle cx="8.500" cy="5.500" r="1.300"/><circle cx="11.500" cy="7" r="1.300"/><circle cx="4" cy="12.500" r="1.300"/><circle cx="7.500" cy="12" r="1.300"/><circle cx="11" cy="11" r="1.300"/><circle cx="13.500" cy="13.500" r="1.200"/></g></svg><div class="t gray" style="left:133px;top:321.5px;letter-spacing:0.17px">screw-room</div><svg style="left:97px;top:342.5px" width="7" height="9" viewBox="0 0 7 9"><path d="M.8 .8 L5.800 4.500 L.8 8.200Z" fill="#8a8a8a" stroke="#4e4e4e" stroke-width="1" stroke-linejoin="round"/></svg><svg style="left:111px;top:339px" width="16" height="16" viewBox="0 0 16 16"><path d="M1 6.500 L7.500 3.500 L15 6.500 V10.500 L8.500 13.500 L1 10.500Z" fill="#808080" stroke="#6c6c6c" stroke-width=".6" stroke-linejoin="round"/><path d="M1 6.500 L7.500 3.500 L15 6.500 L8.500 9.500Z" fill="#9c9c9c"/><path d="M1 6.500 L8.500 9.500 V13.500 L1 10.500Z" fill="#787878"/><path d="M1 6.500 L8.500 9.500 L15 6.500 M8.500 9.500 V13.500" fill="none" stroke="#6c6c6c" stroke-width=".5"/><path d="M5.500 6.200 L8 5.200 L10.800 6.200 L8.300 7.300Z" fill="#b4b4b4"/></svg><div class="t gray" style="left:133px;top:340.5px;letter-spacing:0.36px">shaft-drill</div><svg style="left:111px;top:358px" width="16" height="16" viewBox="0 0 16 16"><path d="M2.500 4.300 L4.800 2.600 L14 3.200 V11.800 L11.800 14 L2.500 13.300Z" fill="#0a14f5" stroke="#00003a" stroke-width="1.300" stroke-linejoin="round"/><path d="M2.500 4.300 L11.800 5 L14 3.200 M11.800 5 V14" fill="none" stroke="#00003a" stroke-width="1.100"/></svg><div class="t b" style="left:133px;top:359.5px;letter-spacing:.03px;color:#2e2e2e">Renacuajo-wheel-big-rounded-horn-final</div><div class="abs" style="left:304px;top:620.500px;width:7px;height:4px;background:repeating-linear-gradient(90deg,#c9c5bf 0,#c9c5bf 1px,transparent 1px,transparent 2.500px)"></div><div class="abs" style="left:550px;top:634px;width:4px;height:7px;background:repeating-linear-gradient(#c9c5bf 0,#c9c5bf 1px,transparent 1px,transparent 3px)"></div><div class="abs" style="left:67.500px;top:626px;width:479px;height:512.500px;border:1px solid #c0bcb6;border-radius:3px;background:#f6f5f4"></div><div class="abs" style="left:69.500px;top:628px;width:475px;height:508.500px;border:1px solid #c0bcb6;background:#fff"></div><div class="hdr" style="left:70.500px;top:629px;width:99px;height:24px;border-right:1px solid #cfccc7"></div><div class="hdr" style="left:169.500px;top:629px;width:374px;height:24px"></div><div class="t" style="left:74px;top:635px;letter-spacing:.33px">Property</div><div class="t" style="left:174px;top:635px;letter-spacing:.12px">Value</div><svg style="left:66px;top:1138px" width="110" height="32" viewBox="0 0 110 32"><path d="M1.500 .5 L8 27 Q8.800 30 12 30 H37 Q40 30 41.200 27 L49.500 1.500" fill="#fff" stroke="#4a4a4a" stroke-width="1"/><path d="M52 2.500 L58.500 25.500 Q59.300 28.500 62.500 28.500 H84 Q87 28.500 88 25.500 L96 2.500" fill="#f2f1f0" stroke="#4a4a4a" stroke-width="1"/><path d="M2 .2 H49.500" stroke="#fff" stroke-width="2.200"/></svg><div class="t" style="left:75.500px;top:1145.500px;letter-spacing:.1px">View</div><div class="t" style="left:124.500px;top:1145px;letter-spacing:.1px">Data</div><div class="abs" style="left:555px;top:1137px;width:1365px;height:33px;background:#f2f1f0"></div><div class="hline" style="left:555px;top:1169.500px;width:1365px;background:#c9c5bf"></div><div class="win" style="left:555px;top:104px;width:683px;height:517px;border-radius:5px 5px 0 0"><div class="ttl" style="border-radius:4px 4px 0 0"><svg style="left:5px;top:3px" width="17.00" height="16.00" viewBox="0 0 17 16"><defs><linearGradient id="fsw4" x1="0" y1="1" x2="1" y2="0"><stop offset="0" stop-color="#f52400"/><stop offset="1" stop-color="#ff6a2c"/></linearGradient></defs><path d="M.5 .5 H8.500 V4 H3.800 V6.500 H6.800 V9.300 H3.800 V14 H.5Z" fill="url(#fsw4)" stroke="#c02600" stroke-width=".5"/><g transform="translate(10.300 9.400)" fill="#0b2a9e"><circle r="4.400"/><path d="M-1.500 -4 L-1.100 -6.400 H1.100 L1.500 -4Z" transform="rotate(0)"/><path d="M-1.500 -4 L-1.100 -6.400 H1.100 L1.500 -4Z" transform="rotate(45)"/><path d="M-1.500 -4 L-1.100 -6.400 H1.100 L1.500 -4Z" transform="rotate(90)"/><path d="M-1.500 -4 L-1.100 -6.400 H1.100 L1.500 -4Z" transform="rotate(135)"/><path d="M-1.500 -4 L-1.100 -6.400 H1.100 L1.500 -4Z" transform="rotate(180)"/><path d="M-1.500 -4 L-1.100 -6.400 H1.100 L1.500 -4Z" transform="rotate(225)"/><path d="M-1.500 -4 L-1.100 -6.400 H1.100 L1.500 -4Z" transform="rotate(270)"/><path d="M-1.500 -4 L-1.100 -6.400 H1.100 L1.500 -4Z" transform="rotate(315)"/><circle r="3.100" fill="#2f5fd8"/><circle r="1.700" fill="#eef3fd"/></g></svg><div class="tx" style="left:189px">Renacuajo-wheel-big-rounded-horn : 4</div><div class="wb" style="left:617.5px"></div><svg style="left:617.5px;top:2px" width="18" height="18"><rect x="5" y="11.500" width="8.200" height="2" fill="#000"/></svg><div class="wb" style="left:637.5px"></div><svg style="left:637.5px;top:2px" width="18" height="18"><rect x="5.500" y="5.800" width="7" height="6.400" fill="none" stroke="#000" stroke-width="1.100"/><rect x="5" y="5" width="8" height="1.600" fill="#000"/></svg><div class="wb" style="left:657.5px"></div><svg style="left:657.5px;top:2px" width="18" height="18"><path d="M5.300 5.300 L12.700 12.700 M12.700 5.300 L5.300 12.700" stroke="#000" stroke-width="2.100"/></svg></div><div class="vp" style="left:3px;top:23px;width:675px;height:489px"><svg width="675" height="489" viewBox="0 0 675 489"><path fill-rule="evenodd" d="M164.5 244.5 A172.5 172.5 0 1 0 509.5 244.5 A172.5 172.5 0 1 0 164.5 244.5Z M302 244.5 A35 35 0 1 0 372 244.5 A35 35 0 1 0 302 244.5Z" fill="#0bb30f"/><circle cx="337" cy="244.5" r="172.5" fill="none" stroke="#101a10" stroke-width="2"/><circle cx="337" cy="244.5" r="35" fill="none" stroke="#101a10" stroke-width="2"/><path d="M312.11 104.70 A31.5 31.5 0 0 1 361.89 104.70 A142 142 0 0 1 361.89 384.30 A31.5 31.5 0 0 1 312.11 384.30 A142 142 0 0 1 312.11 104.70Z" fill="none" stroke="#101a10" stroke-width="2" stroke-linejoin="round"/><circle cx="337.5" cy="123.3" r="5.600" fill="#4e4e7a" stroke="#101a10" stroke-width="1.700"/><circle cx="337.5" cy="365.3" r="5.600" fill="#7f7f9e" stroke="#101a10" stroke-width="1.700"/><path d="M650.8 465.0 L650.8 448.2" stroke="#1c8a1c" stroke-width="2.100"/><path d="M648.6 453.0 H653.0" stroke="#1c8a1c" stroke-width="2"/><path d="M650.8 465.0 L667.8 465.0" stroke="#8c1a1a" stroke-width="2.100"/><path d="M663.0 462.8 V467.2" stroke="#8c1a1a" stroke-width="2"/><circle cx="650.8" cy="465.0" r="2" fill="#1a1a8c"/><path transform="translate(654.0 442.0)" d="M0 .3 L2.5 3.6 L5 .3 M2.5 3.6 V6.800" fill="none" stroke="#000" stroke-width="1.150" stroke-linecap="round" stroke-linejoin="round"/><path transform="translate(654.0 458.0)" d="M0 .5 H5 L0 6.300 H5.200" fill="none" stroke="#000" stroke-width="1.150" stroke-linecap="round" stroke-linejoin="round"/><path transform="translate(670.0 458.0)" d="M0 .3 L5 6.800 M5 .3 L0 6.800" fill="none" stroke="#000" stroke-width="1.150" stroke-linecap="round" stroke-linejoin="round"/></svg></div></div><div class="win actw" style="left:1238px;top:104px;width:683px;height:517px;border-radius:5px 5px 0 0"><div class="ttl act" style="border-radius:4px 4px 0 0"><svg style="left:5px;top:3px" width="17.00" height="16.00" viewBox="0 0 17 16"><defs><linearGradient id="fsw3" x1="0" y1="1" x2="1" y2="0"><stop offset="0" stop-color="#f52400"/><stop offset="1" stop-color="#ff6a2c"/></linearGradient></defs><path d="M.5 .5 H8.500 V4 H3.800 V6.500 H6.800 V9.300 H3.800 V14 H.5Z" fill="url(#fsw3)" stroke="#c02600" stroke-width=".5"/><g transform="translate(10.300 9.400)" fill="#0b2a9e"><circle r="4.400"/><path d="M-1.500 -4 L-1.100 -6.400 H1.100 L1.500 -4Z" transform="rotate(0)"/><path d="M-1.500 -4 L-1.100 -6.400 H1.100 L1.500 -4Z" transform="rotate(45)"/><path d="M-1.500 -4 L-1.100 -6.400 H1.100 L1.500 -4Z" transform="rotate(90)"/><path d="M-1.500 -4 L-1.100 -6.400 H1.100 L1.500 -4Z" transform="rotate(135)"/><path d="M-1.500 -4 L-1.100 -6.400 H1.100 L1.500 -4Z" transform="rotate(180)"/><path d="M-1.500 -4 L-1.100 -6.400 H1.100 L1.500 -4Z" transform="rotate(225)"/><path d="M-1.500 -4 L-1.100 -6.400 H1.100 L1.500 -4Z" transform="rotate(270)"/><path d="M-1.500 -4 L-1.100 -6.400 H1.100 L1.500 -4Z" transform="rotate(315)"/><circle r="3.100" fill="#2f5fd8"/><circle r="1.700" fill="#eef3fd"/></g></svg><div class="tx" style="left:187.5px">Renacuajo-wheel-big-rounded-horn : 3</div><div class="wb" style="left:617.5px"></div><svg style="left:617.5px;top:2px" width="18" height="18"><rect x="5" y="11.500" width="8.200" height="2" fill="#fff"/></svg><div class="wb" style="left:637.5px"></div><svg style="left:637.5px;top:2px" width="18" height="18"><rect x="5.500" y="5.800" width="7" height="6.400" fill="none" stroke="#fff" stroke-width="1.100"/><rect x="5" y="5" width="8" height="1.600" fill="#fff"/></svg><div class="wb" style="left:657.5px"></div><svg style="left:657.5px;top:2px" width="18" height="18"><path d="M5.300 5.300 L12.700 12.700 M12.700 5.300 L5.300 12.700" stroke="#fff" stroke-width="2.100"/></svg></div><div class="vp" style="left:3px;top:23px;width:675px;height:489px"><svg width="675" height="489" viewBox="0 0 675 489"><defs><linearGradient id="abg" gradientUnits="userSpaceOnUse" x1="0" y1="0" x2="0" y2="489"><stop offset="0" stop-color="rgb(51, 51, 102)"/><stop offset="1" stop-color="rgb(152, 152, 176)"/></linearGradient><linearGradient id="ab1" x1="0" y1="0" x2="1" y2="0"><stop offset="0" stop-color="#063a08"/><stop offset=".06" stop-color="#096a0b"/><stop offset=".35" stop-color="#0a7e0c"/><stop offset=".7" stop-color="#0a780c"/><stop offset=".94" stop-color="#085a0a"/><stop offset="1" stop-color="#053006"/></linearGradient><linearGradient id="ab2" x1="0" y1="0" x2="1" y2="0"><stop offset="0" stop-color="#0a780c"/><stop offset=".12" stop-color="#0b9c0e"/><stop offset=".4" stop-color="#0cb411"/><stop offset=".7" stop-color="#0ba80f"/><stop offset=".9" stop-color="#0a860c"/><stop offset="1" stop-color="#075a09"/></linearGradient><linearGradient id="ab3" x1="0" y1="0" x2="1" y2="0"><stop offset="0" stop-color="#074a09"/><stop offset=".1" stop-color="#09700b"/><stop offset=".4" stop-color="#0a8c0d"/><stop offset=".7" stop-color="#0a860c"/><stop offset=".92" stop-color="#08600a"/><stop offset="1" stop-color="#053a07"/></linearGradient><linearGradient id="awl" x1="0" y1="0" x2="1" y2="0"><stop offset="0" stop-color="#042a05"/><stop offset=".1" stop-color="#07480a"/><stop offset=".3" stop-color="#0a720c"/><stop offset=".5" stop-color="#0a780c"/><stop offset=".75" stop-color="#09660b"/><stop offset=".92" stop-color="#06400a"/><stop offset="1" stop-color="#042a05"/></linearGradient></defs><path d="M163.90 250.30 L163.90 259.60 A172.40 123.61 0 0 0 508.70 259.60 L508.70 250.30 A172.40 123.61 0 0 0 163.90 250.30Z" fill="url(#ab3)"/><path d="M163.90 259.60 A172.40 123.61 0 0 0 508.70 259.60" fill="none" stroke="#101a10" stroke-width="2"/><path d="M172.90 243.90 L163.90 250.30 A172.40 123.61 0 0 0 508.70 250.30 L499.70 243.90 A163.40 117.16 0 0 0 172.90 243.90Z" fill="url(#ab2)"/><path d="M163.90 250.30 A172.40 123.61 0 0 0 508.70 250.30" fill="none" stroke="#101a10" stroke-width="1.8"/><path d="M163.90 229.00 L163.90 237.50 A172.40 123.61 0 0 0 508.70 237.50 L508.70 229.00 A172.40 123.61 0 0 0 163.90 229.00Z" fill="url(#ab1)"/><path d="M163.90 237.50 A172.40 123.61 0 0 0 508.70 237.50" fill="none" stroke="#101a10" stroke-width="1.9"/><path d="M335.49999999999994 352.6108 V383.2108" stroke="#101a10" stroke-width="1.400"/><ellipse cx="336.29999999999995" cy="229" rx="172.4" ry="123.61" fill="#0b940e" stroke="#101a10" stroke-width="2"/><clipPath id="arc"><path d="M196.63 210.63 A142.00 101.81 0 0 1 475.97 210.63 A32.00 22.94 0 0 1 475.97 247.37 A142.00 101.81 0 0 1 196.63 247.37 A32.00 22.94 0 0 1 196.63 210.63Z"/></clipPath><path d="M196.63 210.63 A142.00 101.81 0 0 1 475.97 210.63 A32.00 22.94 0 0 1 475.97 247.37 A142.00 101.81 0 0 1 196.63 247.37 A32.00 22.94 0 0 1 196.63 210.63Z" fill="url(#awl)"/><g clip-path="url(#arc)"><path d="M196.63 229.13 A142.00 101.81 0 0 1 475.97 229.13 A32.00 22.94 0 0 1 475.97 265.87 A142.00 101.81 0 0 1 196.63 265.87 A32.00 22.94 0 0 1 196.63 229.13Z" fill="#0b940e" stroke="#101a10" stroke-width="1.900"/><clipPath id="ahc"><ellipse cx="336.29999999999995" cy="247.5" rx="35" ry="25.09"/></clipPath><ellipse cx="336.29999999999995" cy="247.5" rx="35" ry="25.09" fill="url(#awl)"/><g clip-path="url(#ahc)"><ellipse cx="336.29999999999995" cy="260" rx="35" ry="25.09" fill="url(#abg)" stroke="#101a10" stroke-width="1.600"/></g><ellipse cx="336.29999999999995" cy="247.5" rx="35" ry="25.09" fill="none" stroke="#101a10" stroke-width="1.900"/><path d="M337.79999999999995 222.405 V234.905" stroke="#101a10" stroke-width="1.200"/><ellipse cx="215.29999999999995" cy="248.5" rx="6.200" ry="4.600" fill="#0a6c0c" stroke="#101a10" stroke-width="1.500"/><ellipse cx="457.29999999999995" cy="245.3" rx="6.200" ry="4.600" fill="#0a6c0c" stroke="#101a10" stroke-width="1.500"/></g><path d="M196.63 210.63 A142.00 101.81 0 0 1 475.97 210.63 A32.00 22.94 0 0 1 475.97 247.37 A142.00 101.81 0 0 1 196.63 247.37 A32.00 22.94 0 0 1 196.63 210.63Z" fill="none" stroke="#101a10" stroke-width="2"/><path d="M337.99999999999994 127.186 V145.686" stroke="#101a10" stroke-width="1.300"/><path d="M649.9 464.9 L649.9 451.2" stroke="#1a1a8c" stroke-width="2.100"/><path d="M647.7 455.3 H652.1" stroke="#1a1a8c" stroke-width="2"/><path d="M649.9 464.9 L665.9 464.9" stroke="#1c8a1c" stroke-width="2.100"/><path d="M649.9 464.9 L649.9 479.7" stroke="#8c1a1a" stroke-width="2.100"/><path d="M647.2 474.9 H651.6" stroke="#8c1a1a" stroke-width="2"/><path transform="translate(652.0 444.0)" d="M0 .5 H5 L0 6.300 H5.200" fill="none" stroke="#000" stroke-width="1.150" stroke-linecap="round" stroke-linejoin="round"/><path transform="translate(669.0 458.0)" d="M0 .3 L2.5 3.6 L5 .3 M2.5 3.6 V6.800" fill="none" stroke="#000" stroke-width="1.150" stroke-linecap="round" stroke-linejoin="round"/><path transform="translate(652.0 473.0)" d="M0 .3 L5 6.800 M5 .3 L0 6.800" fill="none" stroke="#000" stroke-width="1.150" stroke-linecap="round" stroke-linejoin="round"/></svg></div></div><div class="win" style="left:555px;top:621px;width:683px;height:516px;border-radius:5px 5px 0 0"><div class="ttl" style="border-radius:4px 4px 0 0"><svg style="left:5px;top:3px" width="17.00" height="16.00" viewBox="0 0 17 16"><defs><linearGradient id="fsw2" x1="0" y1="1" x2="1" y2="0"><stop offset="0" stop-color="#f52400"/><stop offset="1" stop-color="#ff6a2c"/></linearGradient></defs><path d="M.5 .5 H8.500 V4 H3.800 V6.500 H6.800 V9.300 H3.800 V14 H.5Z" fill="url(#fsw2)" stroke="#c02600" stroke-width=".5"/><g transform="translate(10.300 9.400)" fill="#0b2a9e"><circle r="4.400"/><path d="M-1.500 -4 L-1.100 -6.400 H1.100 L1.500 -4Z" transform="rotate(0)"/><path d="M-1.500 -4 L-1.100 -6.400 H1.100 L1.500 -4Z" transform="rotate(45)"/><path d="M-1.500 -4 L-1.100 -6.400 H1.100 L1.500 -4Z" transform="rotate(90)"/><path d="M-1.500 -4 L-1.100 -6.400 H1.100 L1.500 -4Z" transform="rotate(135)"/><path d="M-1.500 -4 L-1.100 -6.400 H1.100 L1.500 -4Z" transform="rotate(180)"/><path d="M-1.500 -4 L-1.100 -6.400 H1.100 L1.500 -4Z" transform="rotate(225)"/><path d="M-1.500 -4 L-1.100 -6.400 H1.100 L1.500 -4Z" transform="rotate(270)"/><path d="M-1.500 -4 L-1.100 -6.400 H1.100 L1.500 -4Z" transform="rotate(315)"/><circle r="3.100" fill="#2f5fd8"/><circle r="1.700" fill="#eef3fd"/></g></svg><div class="tx" style="left:189px">Renacuajo-wheel-big-rounded-horn : 2</div><div class="wb" style="left:617.5px"></div><svg style="left:617.5px;top:2px" width="18" height="18"><rect x="5" y="11.500" width="8.200" height="2" fill="#000"/></svg><div class="wb" style="left:637.5px"></div><svg style="left:637.5px;top:2px" width="18" height="18"><rect x="5.500" y="5.800" width="7" height="6.400" fill="none" stroke="#000" stroke-width="1.100"/><rect x="5" y="5" width="8" height="1.600" fill="#000"/></svg><div class="wb" style="left:657.5px"></div><svg style="left:657.5px;top:2px" width="18" height="18"><path d="M5.300 5.300 L12.700 12.700 M12.700 5.300 L5.300 12.700" stroke="#000" stroke-width="2.100"/></svg></div><div class="vp" style="left:3px;top:23px;width:675px;height:488px"><svg width="675" height="488" viewBox="0 0 675 488"><defs><linearGradient id="gcyl" x1="0" y1="0" x2="1" y2="0"><stop offset="0" stop-color="#083a09"/><stop offset=".04" stop-color="#0a560c"/><stop offset=".15" stop-color="#0b800d"/><stop offset=".36" stop-color="#0bac0f"/><stop offset=".5" stop-color="#0bb30f"/><stop offset=".64" stop-color="#0bac0f"/><stop offset=".85" stop-color="#0b800d"/><stop offset=".96" stop-color="#0a560c"/><stop offset="1" stop-color="#083a09"/></linearGradient><linearGradient id="ggrv" x1="0" y1="0" x2="1" y2="0"><stop offset="0" stop-color="#062a07"/><stop offset=".08" stop-color="#094c0a"/><stop offset=".25" stop-color="#0a6c0c"/><stop offset=".4" stop-color="#0b840d"/><stop offset=".6" stop-color="#0b840d"/><stop offset=".75" stop-color="#0a6c0c"/><stop offset=".92" stop-color="#094c0a"/><stop offset="1" stop-color="#062a07"/></linearGradient></defs><path d="M166 235 L175 244 L166 253 H510 L501 244 L510 235Z" fill="url(#ggrv)"/><rect x="166" y="221.79999999999995" width="344" height="13.200000000000045" fill="url(#gcyl)"/><rect x="166" y="253" width="344" height="12.799999999999955" fill="url(#gcyl)"/><path d="M166 221.79999999999995 H510 M165 235 H511 M174 244 H502 M165 253 H511 M166 265.79999999999995 H510" stroke="#151a17" stroke-width="1.900" fill="none"/><path d="M166 221.79999999999995 V235 L175 244 L166 253 V265.79999999999995 M510 221.79999999999995 V235 L501 244 L510 253 V265.79999999999995" stroke="#151a17" stroke-width="1.200" fill="none"/><path d="M650.8 464.0 L650.8 447.2" stroke="#1a1a8c" stroke-width="2.100"/><path d="M648.6 452.0 H653.0" stroke="#1a1a8c" stroke-width="2"/><path d="M650.8 464.0 L667.8 464.0" stroke="#8c1a1a" stroke-width="2.100"/><path d="M663.0 461.8 V466.2" stroke="#8c1a1a" stroke-width="2"/><path transform="translate(654.0 441.0)" d="M0 .5 H5 L0 6.300 H5.200" fill="none" stroke="#000" stroke-width="1.150" stroke-linecap="round" stroke-linejoin="round"/><path transform="translate(654.0 457.0)" d="M0 .3 L2.5 3.6 L5 .3 M2.5 3.6 V6.800" fill="none" stroke="#000" stroke-width="1.150" stroke-linecap="round" stroke-linejoin="round"/><path transform="translate(670.0 457.0)" d="M0 .3 L5 6.800 M5 .3 L0 6.800" fill="none" stroke="#000" stroke-width="1.150" stroke-linecap="round" stroke-linejoin="round"/></svg></div></div><div class="win" style="left:1238px;top:621px;width:683px;height:516px;border-radius:5px 5px 0 0"><div class="ttl" style="border-radius:4px 4px 0 0"><svg style="left:5px;top:3px" width="17.00" height="16.00" viewBox="0 0 17 16"><defs><linearGradient id="fsw1" x1="0" y1="1" x2="1" y2="0"><stop offset="0" stop-color="#f52400"/><stop offset="1" stop-color="#ff6a2c"/></linearGradient></defs><path d="M.5 .5 H8.500 V4 H3.800 V6.500 H6.800 V9.300 H3.800 V14 H.5Z" fill="url(#fsw1)" stroke="#c02600" stroke-width=".5"/><g transform="translate(10.300 9.400)" fill="#0b2a9e"><circle r="4.400"/><path d="M-1.500 -4 L-1.100 -6.400 H1.100 L1.500 -4Z" transform="rotate(0)"/><path d="M-1.500 -4 L-1.100 -6.400 H1.100 L1.500 -4Z" transform="rotate(45)"/><path d="M-1.500 -4 L-1.100 -6.400 H1.100 L1.500 -4Z" transform="rotate(90)"/><path d="M-1.500 -4 L-1.100 -6.400 H1.100 L1.500 -4Z" transform="rotate(135)"/><path d="M-1.500 -4 L-1.100 -6.400 H1.100 L1.500 -4Z" transform="rotate(180)"/><path d="M-1.500 -4 L-1.100 -6.400 H1.100 L1.500 -4Z" transform="rotate(225)"/><path d="M-1.500 -4 L-1.100 -6.400 H1.100 L1.500 -4Z" transform="rotate(270)"/><path d="M-1.500 -4 L-1.100 -6.400 H1.100 L1.500 -4Z" transform="rotate(315)"/><circle r="3.100" fill="#2f5fd8"/><circle r="1.700" fill="#eef3fd"/></g></svg><div class="tx" style="left:188.5px">Renacuajo-wheel-big-rounded-horn : 1</div><div class="wb" style="left:617.5px"></div><svg style="left:617.5px;top:2px" width="18" height="18"><rect x="5" y="11.500" width="8.200" height="2" fill="#000"/></svg><div class="wb" style="left:637.5px"></div><svg style="left:637.5px;top:2px" width="18" height="18"><rect x="5.500" y="5.800" width="7" height="6.400" fill="none" stroke="#000" stroke-width="1.100"/><rect x="5" y="5" width="8" height="1.600" fill="#000"/></svg><div class="wb" style="left:657.5px"></div><svg style="left:657.5px;top:2px" width="18" height="18"><path d="M5.300 5.300 L12.700 12.700 M12.700 5.300 L5.300 12.700" stroke="#000" stroke-width="2.100"/></svg></div><div class="vp" style="left:3px;top:23px;width:675px;height:488px"><svg width="675" height="488" viewBox="0 0 675 488"><defs><linearGradient id="bbg" gradientUnits="userSpaceOnUse" x1="0" y1="0" x2="0" y2="488"><stop offset="0" stop-color="rgb(51, 51, 102)"/><stop offset="1" stop-color="rgb(152, 152, 176)"/></linearGradient><linearGradient id="bb1" x1="0" y1="0" x2="1" y2="0"><stop offset="0" stop-color="#063a08"/><stop offset=".06" stop-color="#096a0b"/><stop offset=".35" stop-color="#0a7e0c"/><stop offset=".7" stop-color="#0a780c"/><stop offset=".94" stop-color="#085a0a"/><stop offset="1" stop-color="#053006"/></linearGradient><linearGradient id="bb2" x1="0" y1="0" x2="1" y2="0"><stop offset="0" stop-color="#0a780c"/><stop offset=".12" stop-color="#0b9c0e"/><stop offset=".4" stop-color="#0cb411"/><stop offset=".7" stop-color="#0ba80f"/><stop offset=".9" stop-color="#0a860c"/><stop offset="1" stop-color="#075a09"/></linearGradient><linearGradient id="bb3" x1="0" y1="0" x2="1" y2="0"><stop offset="0" stop-color="#074a09"/><stop offset=".1" stop-color="#09700b"/><stop offset=".4" stop-color="#0a8c0d"/><stop offset=".7" stop-color="#0a860c"/><stop offset=".92" stop-color="#08600a"/><stop offset="1" stop-color="#053a07"/></linearGradient><linearGradient id="bwl" x1="0" y1="0" x2="1" y2="0"><stop offset="0" stop-color="#042a05"/><stop offset=".1" stop-color="#07480a"/><stop offset=".3" stop-color="#0a720c"/><stop offset=".5" stop-color="#0a780c"/><stop offset=".75" stop-color="#09660b"/><stop offset=".92" stop-color="#06400a"/><stop offset="1" stop-color="#042a05"/></linearGradient></defs><path d="M196.00 248.40 L196.00 254.60 A141.20 106.89 0 0 0 478.40 254.60 L478.40 248.40 A141.20 106.89 0 0 0 196.00 248.40Z" fill="url(#bb3)"/><path d="M196.00 254.60 A141.20 106.89 0 0 0 478.40 254.60" fill="none" stroke="#101a10" stroke-width="2"/><path d="M203.40 243.10 L196.00 248.40 A141.20 106.89 0 0 0 478.40 248.40 L471.00 243.10 A133.80 101.29 0 0 0 203.40 243.10Z" fill="url(#bb2)"/><path d="M196.00 248.40 A141.20 106.89 0 0 0 478.40 248.40" fill="none" stroke="#101a10" stroke-width="1.7"/><path d="M196.00 232.10 L196.00 237.80 A141.20 106.89 0 0 0 478.40 237.80 L478.40 232.10 A141.20 106.89 0 0 0 196.00 232.10Z" fill="url(#bb1)"/><path d="M196.00 237.80 A141.20 106.89 0 0 0 478.40 237.80" fill="none" stroke="#101a10" stroke-width="1.8"/><path d="M341.00000000000006 338.9884 V361.4884" stroke="#101a10" stroke-width="1.400"/><ellipse cx="337.20000000000005" cy="232.10000000000002" rx="141.2" ry="106.89" fill="#0b950e" stroke="#101a10" stroke-width="2"/><clipPath id="bhc"><ellipse cx="337.20000000000005" cy="232.10000000000002" rx="29" ry="22.18"/></clipPath><ellipse cx="337.20000000000005" cy="232.10000000000002" rx="29" ry="22.18" fill="url(#bwl)"/><g clip-path="url(#bhc)"><ellipse cx="337.20000000000005" cy="244.50000000000003" rx="29" ry="22.18" fill="url(#bbg)" stroke="#101a10" stroke-width="1.600"/></g><ellipse cx="337.20000000000005" cy="232.10000000000002" rx="29" ry="22.18" fill="none" stroke="#101a10" stroke-width="1.900"/><path d="M336.40000000000003 209.91500000000002 V222.31500000000003" stroke="#101a10" stroke-width="1.200"/><ellipse cx="238.60000000000005" cy="232.40000000000003" rx="5.200" ry="4" fill="#0a6c0c" stroke="#101a10" stroke-width="1.500"/><ellipse cx="435.80000000000007" cy="232.40000000000003" rx="5.200" ry="4" fill="#0a6c0c" stroke="#101a10" stroke-width="1.500"/><path d="M650.2 464.2 L633.0 464.2" stroke="#1c8a1c" stroke-width="2.100"/><path d="M650.2 463.7 L650.2 478.7" stroke="#8c1a1a" stroke-width="2.100"/><path d="M647.4 474.0 H651.8" stroke="#8c1a1a" stroke-width="2"/><circle cx="648.5" cy="470.5" r=".7" fill="#1a1a8c"/><path transform="translate(635.8 458.0)" d="M0 .3 L2.5 3.6 L5 .3 M2.5 3.6 V6.800" fill="none" stroke="#000" stroke-width="1.150" stroke-linecap="round" stroke-linejoin="round"/><path transform="translate(652.0 466.0)" d="M0 .5 H5 L0 6.300 H5.200" fill="none" stroke="#000" stroke-width="1.150" stroke-linecap="round" stroke-linejoin="round"/><path transform="translate(653.0 473.0)" d="M0 .3 L5 6.800 M5 .3 L0 6.800" fill="none" stroke="#000" stroke-width="1.150" stroke-linecap="round" stroke-linejoin="round"/></svg></div></div><div class="abs" style="left:556px;top:1137px;width:318.0px;height:29.500px;border:1px solid #c9c5bf;border-top:none;border-radius:0 0 5px 5px;background:linear-gradient(#dddbd7,#e9e7e4 30%,#f1f0ee)"></div><svg style="left:562.5px;top:1145.3px" width="15.30" height="14.40" viewBox="0 0 17 16"><defs><linearGradient id="fst0" x1="0" y1="1" x2="1" y2="0"><stop offset="0" stop-color="#f52400"/><stop offset="1" stop-color="#ff6a2c"/></linearGradient></defs><path d="M.5 .5 H8.500 V4 H3.800 V6.500 H6.800 V9.300 H3.800 V14 H.5Z" fill="url(#fst0)" stroke="#c02600" stroke-width=".5"/><g transform="translate(10.300 9.400)" fill="#0b2a9e"><circle r="4.400"/><path d="M-1.500 -4 L-1.100 -6.400 H1.100 L1.500 -4Z" transform="rotate(0)"/><path d="M-1.500 -4 L-1.100 -6.400 H1.100 L1.500 -4Z" transform="rotate(45)"/><path d="M-1.500 -4 L-1.100 -6.400 H1.100 L1.500 -4Z" transform="rotate(90)"/><path d="M-1.500 -4 L-1.100 -6.400 H1.100 L1.500 -4Z" transform="rotate(135)"/><path d="M-1.500 -4 L-1.100 -6.400 H1.100 L1.500 -4Z" transform="rotate(180)"/><path d="M-1.500 -4 L-1.100 -6.400 H1.100 L1.500 -4Z" transform="rotate(225)"/><path d="M-1.500 -4 L-1.100 -6.400 H1.100 L1.500 -4Z" transform="rotate(270)"/><path d="M-1.500 -4 L-1.100 -6.400 H1.100 L1.500 -4Z" transform="rotate(315)"/><circle r="3.100" fill="#2f5fd8"/><circle r="1.700" fill="#eef3fd"/></g></svg><div class="t" style="left:586.3px;top:1146.3px;letter-spacing:.02px">Renacuajo-wheel-big-rounded-horn : 1</div><svg style="left:850.2px;top:1147.5px" width="12" height="12" viewBox="0 0 12 12"><path d="M1.800 1.800 L10.200 10.200 M10.200 1.800 L1.800 10.200" stroke="#55534e" stroke-width="3" stroke-linecap="butt"/></svg><div class="abs" style="left:873.5px;top:1137px;width:321.0px;height:29.500px;border:1px solid #c9c5bf;border-top:none;border-radius:0 0 5px 5px;background:linear-gradient(#dddbd7,#e9e7e4 30%,#f1f0ee)"></div><svg style="left:882.1px;top:1145.3px" width="15.30" height="14.40" viewBox="0 0 17 16"><defs><linearGradient id="fst1" x1="0" y1="1" x2="1" y2="0"><stop offset="0" stop-color="#f52400"/><stop offset="1" stop-color="#ff6a2c"/></linearGradient></defs><path d="M.5 .5 H8.500 V4 H3.800 V6.500 H6.800 V9.300 H3.800 V14 H.5Z" fill="url(#fst1)" stroke="#c02600" stroke-width=".5"/><g transform="translate(10.300 9.400)" fill="#0b2a9e"><circle r="4.400"/><path d="M-1.500 -4 L-1.100 -6.400 H1.100 L1.500 -4Z" transform="rotate(0)"/><path d="M-1.500 -4 L-1.100 -6.400 H1.100 L1.500 -4Z" transform="rotate(45)"/><path d="M-1.500 -4 L-1.100 -6.400 H1.100 L1.500 -4Z" transform="rotate(90)"/><path d="M-1.500 -4 L-1.100 -6.400 H1.100 L1.500 -4Z" transform="rotate(135)"/><path d="M-1.500 -4 L-1.100 -6.400 H1.100 L1.500 -4Z" transform="rotate(180)"/><path d="M-1.500 -4 L-1.100 -6.400 H1.100 L1.500 -4Z" transform="rotate(225)"/><path d="M-1.500 -4 L-1.100 -6.400 H1.100 L1.500 -4Z" transform="rotate(270)"/><path d="M-1.500 -4 L-1.100 -6.400 H1.100 L1.500 -4Z" transform="rotate(315)"/><circle r="3.100" fill="#2f5fd8"/><circle r="1.700" fill="#eef3fd"/></g></svg><div class="t" style="left:905.9px;top:1146.3px;letter-spacing:.02px">Renacuajo-wheel-big-rounded-horn : 2</div><svg style="left:1169.8px;top:1147.5px" width="12" height="12" viewBox="0 0 12 12"><path d="M1.800 1.800 L10.200 10.200 M10.200 1.800 L1.800 10.200" stroke="#55534e" stroke-width="3" stroke-linecap="butt"/></svg><div class="abs" style="left:1194px;top:1137px;width:320px;height:32px;border:1px solid #b9b5af;border-top:none;border-radius:0 0 5px 5px;background:#fdfdfd"></div><svg style="left:1202.1px;top:1146.3px" width="15.30" height="14.40" viewBox="0 0 17 16"><defs><linearGradient id="fst2" x1="0" y1="1" x2="1" y2="0"><stop offset="0" stop-color="#f52400"/><stop offset="1" stop-color="#ff6a2c"/></linearGradient></defs><path d="M.5 .5 H8.500 V4 H3.800 V6.500 H6.800 V9.300 H3.800 V14 H.5Z" fill="url(#fst2)" stroke="#c02600" stroke-width=".5"/><g transform="translate(10.300 9.400)" fill="#0b2a9e"><circle r="4.400"/><path d="M-1.500 -4 L-1.100 -6.400 H1.100 L1.500 -4Z" transform="rotate(0)"/><path d="M-1.500 -4 L-1.100 -6.400 H1.100 L1.500 -4Z" transform="rotate(45)"/><path d="M-1.500 -4 L-1.100 -6.400 H1.100 L1.500 -4Z" transform="rotate(90)"/><path d="M-1.500 -4 L-1.100 -6.400 H1.100 L1.500 -4Z" transform="rotate(135)"/><path d="M-1.500 -4 L-1.100 -6.400 H1.100 L1.500 -4Z" transform="rotate(180)"/><path d="M-1.500 -4 L-1.100 -6.400 H1.100 L1.500 -4Z" transform="rotate(225)"/><path d="M-1.500 -4 L-1.100 -6.400 H1.100 L1.500 -4Z" transform="rotate(270)"/><path d="M-1.500 -4 L-1.100 -6.400 H1.100 L1.500 -4Z" transform="rotate(315)"/><circle r="3.100" fill="#2f5fd8"/><circle r="1.700" fill="#eef3fd"/></g></svg><div class="t" style="left:1225.8999999999999px;top:1147.3px;letter-spacing:.02px">Renacuajo-wheel-big-rounded-horn : 3</div><svg style="left:1489.8px;top:1148.5px" width="12" height="12" viewBox="0 0 12 12"><path d="M1.800 1.800 L10.200 10.200 M10.200 1.800 L1.800 10.200" stroke="#55534e" stroke-width="3" stroke-linecap="butt"/></svg><div class="abs" style="left:1514px;top:1137px;width:320.5px;height:29.500px;border:1px solid #c9c5bf;border-top:none;border-radius:0 0 5px 5px;background:linear-gradient(#dddbd7,#e9e7e4 30%,#f1f0ee)"></div><svg style="left:1521.9px;top:1145.3px" width="15.30" height="14.40" viewBox="0 0 17 16"><defs><linearGradient id="fst3" x1="0" y1="1" x2="1" y2="0"><stop offset="0" stop-color="#f52400"/><stop offset="1" stop-color="#ff6a2c"/></linearGradient></defs><path d="M.5 .5 H8.500 V4 H3.800 V6.500 H6.800 V9.300 H3.800 V14 H.5Z" fill="url(#fst3)" stroke="#c02600" stroke-width=".5"/><g transform="translate(10.300 9.400)" fill="#0b2a9e"><circle r="4.400"/><path d="M-1.500 -4 L-1.100 -6.400 H1.100 L1.500 -4Z" transform="rotate(0)"/><path d="M-1.500 -4 L-1.100 -6.400 H1.100 L1.500 -4Z" transform="rotate(45)"/><path d="M-1.500 -4 L-1.100 -6.400 H1.100 L1.500 -4Z" transform="rotate(90)"/><path d="M-1.500 -4 L-1.100 -6.400 H1.100 L1.500 -4Z" transform="rotate(135)"/><path d="M-1.500 -4 L-1.100 -6.400 H1.100 L1.500 -4Z" transform="rotate(180)"/><path d="M-1.500 -4 L-1.100 -6.400 H1.100 L1.500 -4Z" transform="rotate(225)"/><path d="M-1.500 -4 L-1.100 -6.400 H1.100 L1.500 -4Z" transform="rotate(270)"/><path d="M-1.500 -4 L-1.100 -6.400 H1.100 L1.500 -4Z" transform="rotate(315)"/><circle r="3.100" fill="#2f5fd8"/><circle r="1.700" fill="#eef3fd"/></g></svg><div class="t" style="left:1545.7px;top:1146.3px;letter-spacing:.02px">Renacuajo-wheel-big-rounded-horn : 4</div><svg style="left:1809.6000000000001px;top:1147.5px" width="12" height="12" viewBox="0 0 12 12"><path d="M1.800 1.800 L10.200 10.200 M10.200 1.800 L1.800 10.200" stroke="#55534e" stroke-width="3" stroke-linecap="butt"/></svg><div class="t" style="left:71px;top:1177.500px;letter-spacing:.3px">Valid</div><div class="t" style="left:1795px;top:1179px;letter-spacing:-.2px">107.80 x 78.10 mm</div></body></html>
